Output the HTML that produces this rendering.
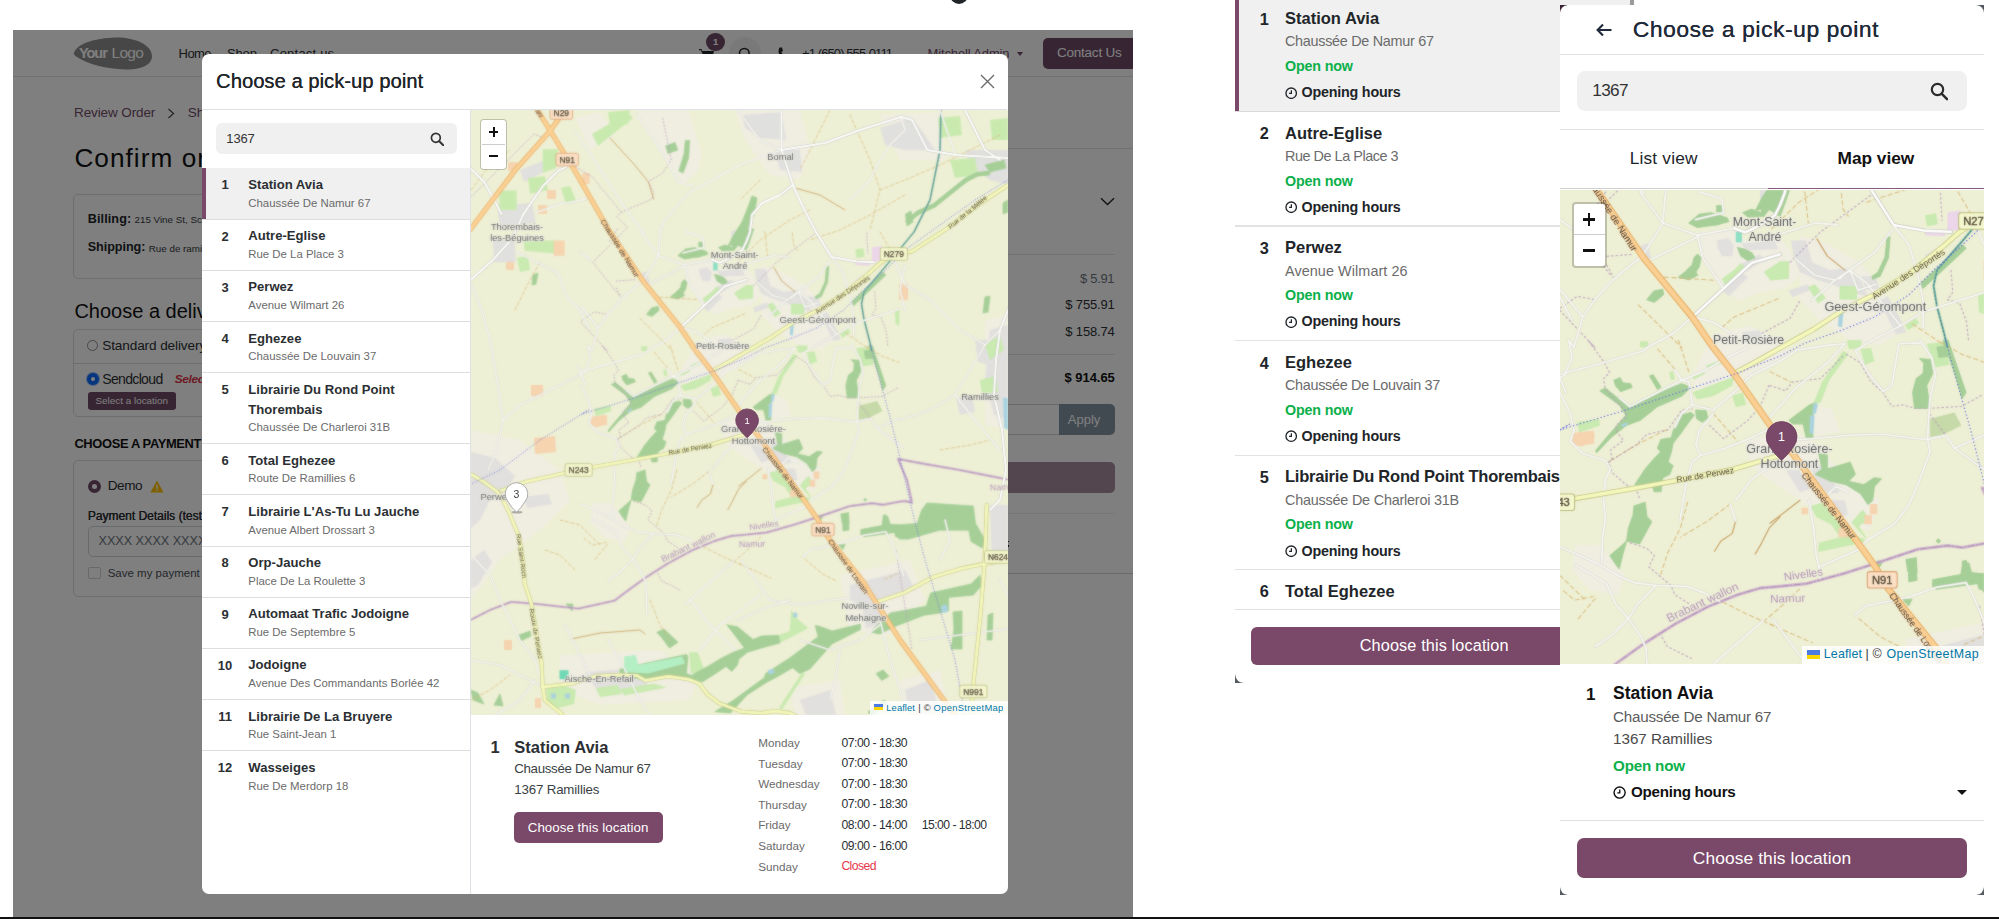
<!DOCTYPE html>
<html>
<head>
<meta charset="utf-8">
<title>Choose a pick-up point</title>
<style>
*{box-sizing:border-box;margin:0;padding:0}
html,body{width:1999px;height:919px;overflow:hidden;background:#fff}
body{font-family:"Liberation Sans",sans-serif;color:#212529;position:relative}
.abs{position:absolute}
.t{position:absolute;white-space:nowrap;line-height:1}
#page{position:absolute;left:0;top:0;width:1133px;height:918px;background:#fff;overflow:hidden;clip-path:inset(30px 0 0 13px)}
#dim{position:absolute;left:13px;top:30px;width:1120px;height:888px;background:rgba(0,0,0,.5)}
#modal{position:absolute;left:202px;top:54px;width:805.5px;height:840.4px;background:#fff;border-radius:7px;overflow:hidden}
svg text{font-family:"Liberation Sans",sans-serif}
</style>
</head>

<body>
<svg width="0" height="0" style="position:absolute"><defs><g id="osm" font-family="Liberation Sans, sans-serif">
<rect x="440" y="80" width="600" height="660" fill="#eef0d5"/>
<polygon points="684.0,262.7 712.5,259.6 720.0,268.8 746.3,267.3 753.8,276.5 761.3,295.7 750.8,305.7 731.3,308.8 716.3,314.9 705.0,308.8 698.3,299.5 689.3,285.7" fill="#f0eee1" />
<polygon points="761.3,265.0 783.8,272.7 806.3,285.7 821.3,303.4 840.1,337.9 821.3,349.5 798.8,345.6 776.3,330.3 761.3,314.9" fill="#f0eee1" />
<polygon points="695.3,341.8 723.8,334.1 742.5,344.1 753.8,354.8 731.3,370.2 708.8,379.4 686.3,385.6 678.8,374.8 686.3,361.0" fill="#f0eee1" />
<polygon points="771.0,395.5 785.3,397.8 791.3,416.3 772.5,419.4" fill="#f0eee1" />
<polygon points="720.0,422.4 753.8,414.7 770.3,422.4 798.8,453.1 821.3,468.5 813.8,491.6 783.8,483.9 761.3,468.5 738.8,453.1 723.8,441.6" fill="#f0eee1" />
<polygon points="592.5,503.1 611.3,503.1 630.0,526.1 624.8,541.5 603.8,537.6 590.2,522.3" fill="#f0eee1" />
<polygon points="636.4,110.0 688.6,110.0 701.6,153.5 697.3,173.1 682.0,184.0 666.8,160.0" fill="#f0eee1" />
<polygon points="575.0,118.0 600.0,112.0 615.0,135.0 590.0,150.0" fill="#f0eee1" />
<polygon points="471.0,430.0 520.0,440.0 560.0,470.0 570.0,500.0 540.0,530.0 500.0,560.0 471.0,600.0" fill="#f0eee1" />
<polygon points="735.0,110.0 800.0,110.0 810.0,150.0 800.0,180.0 770.0,175.0 745.0,140.0" fill="#f0eee1" />
<polygon points="560.0,655.0 660.0,650.0 700.0,675.0 690.0,700.0 600.0,705.0 560.0,690.0" fill="#f0eee1" />
<polygon points="840.0,575.0 910.0,560.0 925.0,600.0 890.0,635.0 850.0,630.0" fill="#f0eee1" />
<polygon points="985.0,320.0 1008.0,315.0 1008.0,430.0 985.0,425.0" fill="#f0eee1" />
<polygon points="880.0,115.0 940.0,112.0 945.0,160.0 900.0,160.0" fill="#f0eee1" />
<polygon points="790.0,688.0 840.0,680.0 845.0,715.0 795.0,715.0" fill="#f0eee1" />
<polygon points="900.0,680.0 940.0,670.0 950.0,715.0 905.0,715.0" fill="#f0eee1" />
<polygon points="698.8,269.0 707.3,267.3 711.8,272.7 710.3,281.0 702.8,281.1 699.8,275.0" fill="#e1e0de" />
<polygon points="717.0,271.1 742.5,269.6 744.8,275.7 720.8,276.5" fill="#e1e0de" />
<polygon points="714.8,288.0 731.3,279.6 734.3,284.2 720.0,293.4 713.3,293.4" fill="#e1e0de" />
<polygon points="731.3,230.4 740.3,230.4 741.8,241.9 735.8,248.8 731.3,241.9" fill="#e1e0de" />
<polygon points="702.8,307.2 717.8,293.4 722.3,297.2 708.0,311.8" fill="#e1e0de" />
<polygon points="754.5,269.0 765.8,268.8 770.3,285.7 783.8,291.9 795.8,290.3 807.8,301.1 811.9,311.8 798.8,308.8 787.5,303.4 774.8,299.5 761.3,293.4 756.8,282.6" fill="#e1e0de" />
<polygon points="753.0,307.2 767.3,302.6 768.8,307.2 755.3,312.6" fill="#e1e0de" />
<polygon points="807.8,296.5 818.3,296.5 820.6,305.7 810.8,307.2" fill="#e1e0de" />
<polygon points="821.3,314.9 827.3,311.8 836.3,328.7 840.8,339.5 833.3,341.0 827.3,328.7" fill="#e1e0de" />
<polygon points="855.1,280.3 866.3,273.4 868.6,276.5 857.3,284.2" fill="#e1e0de" />
<polygon points="717.8,339.5 731.3,337.9 732.8,345.6 719.3,347.2" fill="#e1e0de" />
<polygon points="768.8,441.6 777.8,441.6 786.8,455.5 791.3,462.4 782.3,463.9 773.3,453.1" fill="#e1e0de" />
<polygon points="750.8,445.5 761.3,445.5 770.3,459.3 761.3,462.4" fill="#e1e0de" />
<polygon points="783.8,468.5 795.0,468.5 797.3,480.0 787.5,480.8" fill="#e1e0de" />
<polygon points="641.3,273.4 647.3,271.1 649.5,282.6 644.3,284.2" fill="#e1e0de" />
<polygon points="497.0,205.7 532.0,203.0 536.0,223.0 500.0,226.0" fill="#e1e0de" />
<polygon points="492.8,240.5 514.5,240.5 516.0,262.3 494.0,262.3" fill="#e1e0de" />
<polygon points="520.0,170.0 545.0,160.0 548.0,170.0 524.0,182.0" fill="#e1e0de" />
<polygon points="742.0,115.0 782.0,112.0 786.0,140.0 760.0,138.0 745.0,128.0" fill="#e1e0de" />
<polygon points="775.0,150.0 800.0,150.0 802.0,172.0 780.0,170.0" fill="#e1e0de" />
<polygon points="880.0,128.0 912.0,118.0 925.0,135.0 935.0,150.0 905.0,150.0 885.0,145.0" fill="#e1e0de" />
<polygon points="965.0,150.0 1008.0,150.0 1008.0,185.0 990.0,180.0 970.0,165.0" fill="#e1e0de" />
<polygon points="990.0,330.0 1008.0,325.0 1008.0,420.0 994.0,415.0 985.0,380.0" fill="#e1e0de" />
<polygon points="956.0,398.0 972.0,395.0 975.0,412.0 960.0,415.0" fill="#e1e0de" />
<polygon points="975.0,340.0 990.0,340.0 990.0,365.0 978.0,362.0" fill="#e1e0de" />
<polygon points="850.0,585.0 905.0,570.0 915.0,590.0 880.0,602.0 862.0,606.0 850.0,600.0" fill="#e1e0de" />
<polygon points="862.0,606.0 882.0,602.0 886.0,625.0 866.0,628.0" fill="#e1e0de" />
<polygon points="905.0,690.0 930.0,680.0 940.0,712.0 910.0,715.0" fill="#e1e0de" />
<polygon points="800.0,700.0 830.0,690.0 836.0,715.0 806.0,715.0" fill="#e1e0de" />
<polygon points="990.0,505.0 1008.0,505.0 1008.0,560.0 992.0,560.0" fill="#e1e0de" />
<polygon points="471.0,452.0 495.0,458.0 515.0,476.0 505.0,492.0 490.0,500.0 480.0,520.0 471.0,528.0" fill="#e1e0de" />
<polygon points="471.0,560.0 484.0,550.0 492.0,562.0 478.0,585.0 471.0,588.0" fill="#e1e0de" />
<polygon points="522.0,497.0 548.0,494.0 552.0,504.0 528.0,508.0" fill="#e1e0de" />
<polygon points="585.0,672.0 640.0,668.0 650.0,690.0 600.0,695.0" fill="#e1e0de" />
<polygon points="702.7,298.4 711.8,291.7 717.0,286.3 719.7,289.0 713.1,295.7 705.3,303.8" fill="#c9eab0" />
<polygon points="734.1,293.1 746.3,285.0 753.0,284.9 753.0,298.4 739.2,299.7" fill="#c9eab0" />
<polygon points="680.5,385.7 711.8,373.7 710.5,380.4 696.2,388.4 684.4,391.1" fill="#c9eab0" />
<polygon points="710.5,388.4 718.4,385.7 720.9,395.1 713.1,397.1" fill="#c9eab0" />
<polygon points="594.3,408.4 610.7,405.8 611.3,411.1 595.6,416.5" fill="#c9eab0" />
<polygon points="771.4,393.8 777.9,377.7 793.6,353.6 797.5,356.3 783.2,376.3 776.7,393.8" fill="#c9eab0" />
<polygon points="856.3,348.3 870.7,346.9 873.3,364.4 862.9,366.4" fill="#c9eab0" />
<polygon points="806.7,352.3 814.6,351.6 817.1,361.7 810.0,364.4" fill="#c9eab0" />
<polygon points="791.0,303.8 804.1,303.8 804.1,314.4 791.0,314.4" fill="#c9eab0" />
<polygon points="767.3,304.9 772.5,302.6 780.8,313.4 774.8,317.2" fill="#c9eab0" />
<polygon points="769.3,472.8 779.1,470.0 786.0,479.9 805.4,496.9 811.0,498.4 799.8,485.6 808.2,475.7 813.7,482.7 805.4,488.4 811.0,496.9 808.2,501.2 774.9,508.3 775.5,501.2 791.5,496.9 784.6,487.0 773.5,481.3" fill="#c9eab0" />
<polygon points="796.5,345.6 807.8,345.6 806.3,351.8 798.0,352.5" fill="#c9eab0" />
<polygon points="690.8,365.2 701.3,361.0 702.4,363.3 691.9,367.9" fill="#c9eab0" />
<polygon points="680.3,373.3 689.3,369.0 690.0,371.4 681.4,376.0" fill="#c9eab0" />
<polygon points="663.0,370.2 666.0,369.4 667.5,375.6 664.5,376.3" fill="#c9eab0" />
<polygon points="641.3,346.4 647.3,346.4 647.3,351.0 641.3,351.0" fill="#c9eab0" />
<polygon points="840.1,334.1 848.3,328.7 850.6,332.6 842.3,337.9" fill="#c9eab0" />
<polygon points="855.1,249.6 863.3,248.1 864.8,256.5 856.6,258.1" fill="#c9eab0" />
<polygon points="894.8,311.1 899.3,309.5 899.3,325.7 895.6,324.1" fill="#c9eab0" />
<polygon points="751.5,427.0 756.0,425.5 757.5,430.1 753.0,431.6" fill="#c9eab0" />
<polygon points="499.3,190.5 516.7,190.5 516.7,210.0 499.3,210.0" fill="#c9eab0" />
<polygon points="523.2,240.5 558.0,240.5 556.0,253.6 525.0,251.0" fill="#c9eab0" />
<polygon points="542.8,149.2 558.0,149.2 556.0,168.0 542.8,173.0" fill="#c9eab0" />
<polygon points="592.0,134.0 628.0,113.0 633.0,118.0 598.0,146.0" fill="#c9eab0" />
<polygon points="608.0,112.0 630.0,110.0 628.0,124.0 610.0,127.0" fill="#c9eab0" />
<polygon points="528.0,178.0 545.0,176.0 548.0,190.0 530.0,194.0" fill="#c9eab0" />
<polygon points="561.0,188.0 570.0,186.0 576.0,200.0 566.0,204.0" fill="#c9eab0" />
<polygon points="517.0,258.0 528.0,256.0 530.0,270.0 520.0,272.0" fill="#c9eab0" />
<polygon points="689.3,652.3 697.8,652.3 704.9,672.0 690.7,673.5" fill="#c9eab0" />
<polygon points="620.0,689.0 654.0,683.4 666.7,687.6 624.2,695.4" fill="#c9eab0" />
<polygon points="802.0,672.5 805.0,674.0 782.0,709.5 779.0,708.0" fill="#c9eab0" />
<polygon points="546.0,688.0 560.0,684.0 576.0,690.0 574.0,704.0 558.0,708.0 547.0,702.0" fill="#c9eab0" />
<polygon points="596.0,688.0 618.0,685.0 622.0,694.0 600.0,697.0" fill="#c9eab0" />
<polygon points="778.5,635.3 789.8,631.0 791.2,609.8 796.9,618.3 808.2,628.2 779.9,643.1" fill="#c9eab0" />
<polygon points="990.0,120.0 1008.0,118.0 1008.0,140.0 992.0,140.0" fill="#c9eab0" />
<polygon points="938.0,118.0 960.0,116.0 962.0,135.0 940.0,138.0" fill="#c9eab0" />
<polygon points="950.0,160.0 975.0,158.0 978.0,175.0 955.0,178.0" fill="#c9eab0" />
<polygon points="985.0,345.0 1000.0,335.0 1004.0,350.0 990.0,360.0" fill="#c9eab0" />
<polygon points="980.0,380.0 996.0,376.0 998.0,392.0 982.0,394.0" fill="#c9eab0" />
<polygon points="858.9,405.8 877.2,401.1 882.4,411.1 869.3,417.8 858.9,419.8" fill="#c6d9a8" />
<polygon points="677.9,255.6 685.7,248.9 694.8,247.6 706.6,251.6 707.9,254.3 698.8,257.0 693.5,257.6 684.4,259.0" fill="#a6cf98" stroke="#a6cf98" stroke-width="0.8" stroke-linejoin="round"/>
<polygon points="698.8,242.2 703.3,242.2 703.3,246.9 698.8,246.9" fill="#a6cf98" stroke="#a6cf98" stroke-width="0.8" stroke-linejoin="round"/>
<polygon points="718.4,247.6 724.9,244.9 732.7,247.6 731.4,239.6 738.0,231.6 746.3,228.9 753.8,228.9 750.8,238.1 746.3,250.3 738.0,244.9 734.1,250.3 722.3,250.9" fill="#a6cf98" stroke="#a6cf98" stroke-width="0.8" stroke-linejoin="round"/>
<polygon points="681.8,282.3 684.4,279.6 687.0,282.3 685.7,289.0 683.1,293.1 684.4,295.7 677.9,299.1 670.1,297.1 675.2,293.1 680.5,287.7" fill="#a6cf98" stroke="#a6cf98" stroke-width="0.8" stroke-linejoin="round"/>
<polygon points="646.5,314.4 651.8,307.8 658.3,306.5 659.0,310.4 654.4,314.4 651.8,316.4" fill="#a6cf98" stroke="#a6cf98" stroke-width="0.8" stroke-linejoin="round"/>
<polygon points="714.4,274.3 719.7,275.7 724.9,278.3 727.5,282.3 722.3,284.3 717.0,281.0" fill="#a6cf98" stroke="#a6cf98" stroke-width="0.8" stroke-linejoin="round"/>
<polygon points="611.3,384.4 615.2,382.4 632.2,396.4 659.6,384.4 672.6,379.0 679.1,381.7 672.6,388.4 654.4,396.4 641.3,407.1 630.8,411.1 619.1,420.5 608.7,431.9 608.0,430.5 617.8,418.5 624.3,411.1 630.8,403.1 625.7,395.1" fill="#a6cf98" stroke="#a6cf98" stroke-width="0.8" stroke-linejoin="round"/>
<polygon points="621.8,376.3 626.3,374.3 628.3,378.3 634.1,379.0 635.4,381.7 626.9,385.0 623.0,380.4" fill="#a6cf98" stroke="#a6cf98" stroke-width="0.8" stroke-linejoin="round"/>
<polygon points="648.5,373.0 651.1,372.1 657.0,381.7 654.4,383.3" fill="#a6cf98" stroke="#a6cf98" stroke-width="0.8" stroke-linejoin="round"/>
<polygon points="672.6,403.1 679.1,401.1 681.8,403.1 677.9,408.4 671.3,417.8 666.1,424.5 664.8,431.2 662.2,439.2 666.1,441.9 663.5,448.5 658.3,451.2 657.0,461.9 651.8,461.9 650.5,456.6 637.4,456.6 645.2,444.5 651.8,436.6 657.0,431.2 654.4,428.5 657.0,421.8 664.8,420.5 666.1,415.1" fill="#a6cf98" stroke="#a6cf98" stroke-width="0.8" stroke-linejoin="round"/>
<polygon points="683.1,399.1 690.8,399.8 692.3,405.5 687.8,408.4 683.6,405.5" fill="#a6cf98" stroke="#a6cf98" stroke-width="0.8" stroke-linejoin="round"/>
<polygon points="753.1,407.1 768.8,395.1 772.8,393.8 771.4,401.8 768.8,412.4 771.4,420.5 766.2,421.2 763.6,409.8 755.7,409.8" fill="#a6cf98" stroke="#a6cf98" stroke-width="0.8" stroke-linejoin="round"/>
<polygon points="851.1,359.7 858.9,360.3 860.9,371.0 856.3,380.4 858.9,397.8 847.2,397.8 845.8,385.7 848.5,375.0 853.7,371.0 854.3,363.0" fill="#a6cf98" stroke="#a6cf98" stroke-width="0.8" stroke-linejoin="round"/>
<polygon points="775.3,432.5 781.8,433.9 781.8,444.5 798.9,439.2 802.8,448.5 797.5,453.9 809.3,456.6 817.1,451.2 822.4,451.9 817.1,457.9 815.8,468.5 812.3,471.6 806.7,463.3 796.2,456.6 784.5,453.9 772.8,448.5 777.9,444.5" fill="#a6cf98" stroke="#a6cf98" stroke-width="0.8" stroke-linejoin="round"/>
<polygon points="636.8,472.8 645.1,470.0 646.5,481.3 650.0,484.9 641.0,501.9 631.2,499.8 632.6,489.9 636.1,479.9" fill="#a6cf98" stroke="#a6cf98" stroke-width="0.8" stroke-linejoin="round"/>
<polygon points="631.2,499.8 628.4,509.8 625.7,521.1 622.9,517.5 618.8,511.1 628.4,502.6" fill="#a6cf98" stroke="#a6cf98" stroke-width="0.8" stroke-linejoin="round"/>
<polygon points="840.8,514.0 848.5,512.6 849.1,524.0 842.2,523.2" fill="#a6cf98" stroke="#a6cf98" stroke-width="0.8" stroke-linejoin="round"/>
<polygon points="860.9,529.6 883.1,525.3 883.1,515.4 885.9,514.7 888.7,524.0 903.8,525.3 903.8,538.2 895.6,536.7 894.2,531.0 885.9,531.0 860.9,535.3" fill="#a6cf98" stroke="#a6cf98" stroke-width="0.8" stroke-linejoin="round"/>
<polygon points="863.6,499.8 865.1,498.2 866.6,499.8 865.1,501.3" fill="#a6cf98" stroke="#a6cf98" stroke-width="0.8" stroke-linejoin="round"/>
<polygon points="819.1,515.4 824.3,514.6 820.6,520.0" fill="#a6cf98" stroke="#a6cf98" stroke-width="0.8" stroke-linejoin="round"/>
<polygon points="838.6,544.9 845.3,544.5 842.7,549.5" fill="#a6cf98" stroke="#a6cf98" stroke-width="0.8" stroke-linejoin="round"/>
<polygon points="826.6,266.3 828.8,266.3 827.6,282.3 821.3,296.5 815.8,298.8 815.3,296.5 819.8,293.4 825.1,281.9" fill="#a6cf98" stroke="#a6cf98" stroke-width="0.8" stroke-linejoin="round"/>
<polygon points="868.6,345.6 872.3,345.6 885.8,385.6 882.8,390.2 879.1,376.3" fill="#a6cf98" stroke="#a6cf98" stroke-width="0.8" stroke-linejoin="round"/>
<polygon points="864.1,351.0 873.1,349.5 873.8,357.9 865.6,358.7" fill="#a6cf98" stroke="#a6cf98" stroke-width="0.8" stroke-linejoin="round"/>
<polygon points="850.6,303.0 883.2,272.3 885.8,275.0 853.6,305.7" fill="#a6cf98" stroke="#a6cf98" stroke-width="0.8" stroke-linejoin="round"/>
<polygon points="726.8,624.7 737.4,626.8 753.0,639.5 761.5,636.0 778.5,635.3 779.9,643.1 761.5,648.0 747.3,652.3 738.8,659.3 737.4,665.0 731.8,671.4 726.1,666.4 713.4,674.9 702.1,682.0 692.2,674.9 707.7,666.4 721.9,657.9 733.2,652.3 744.5,648.0" fill="#a6cf98" stroke="#a6cf98" stroke-width="0.8" stroke-linejoin="round"/>
<polygon points="815.2,625.4 820.9,626.8 832.2,631.0 860.5,624.0 860.5,629.6 832.2,643.8 820.9,656.5 809.6,669.2 799.7,673.5 792.6,667.8 775.6,677.7 767.1,682.0 747.3,694.7 730.4,713.1 714.8,711.7 733.2,700.4 764.3,677.7 765.7,673.5 789.8,657.9 818.1,636.7" fill="#a6cf98" stroke="#a6cf98" stroke-width="0.8" stroke-linejoin="round"/>
<polygon points="644.0,663.6 686.5,654.4 687.9,656.5 686.5,673.5 704.9,680.5 699.2,682.0 668.1,674.9 639.8,679.1 620.0,674.9 620.0,669.2" fill="#a6cf98" stroke="#a6cf98" stroke-width="0.8" stroke-linejoin="round"/>
<polygon points="656.8,632.4 663.9,628.9 678.0,642.3 669.5,648.0 661.0,636.7" fill="#a6cf98" stroke="#a6cf98" stroke-width="0.8" stroke-linejoin="round"/>
<polygon points="876.1,673.5 883.2,669.9 888.8,676.3 881.7,680.5" fill="#a6cf98" stroke="#a6cf98" stroke-width="0.8" stroke-linejoin="round"/>
<polygon points="868.0,712.0 884.0,700.0 887.0,703.0 872.0,716.0" fill="#a6cf98" stroke="#a6cf98" stroke-width="0.8" stroke-linejoin="round"/>
<polygon points="861.2,531.3 881.4,529.0 883.6,516.7 888.0,516.7 890.4,525.7 917.2,523.4 921.7,510.0 927.0,503.0 973.3,506.0 975.5,523.4 984.5,539.1 982.2,548.1 971.0,541.4 968.8,530.2 939.7,530.2 908.3,539.1 899.3,539.1 894.8,532.4 863.5,536.9" fill="#a6cf98" stroke="#a6cf98" stroke-width="0.8" stroke-linejoin="round"/>
<polygon points="890.4,613.0 926.2,606.3 930.7,593.0 971.0,584.0 980.0,575.0 981.0,586.2 973.3,595.1 948.6,597.4 948.6,610.8 939.7,613.0 924.0,615.3 894.8,626.5 880.0,634.0 870.0,632.0" fill="#a6cf98" stroke="#a6cf98" stroke-width="0.8" stroke-linejoin="round"/>
<polygon points="953.0,612.0 962.0,611.0 962.0,649.0 951.0,649.0 954.0,630.0" fill="#a6cf98" stroke="#a6cf98" stroke-width="0.8" stroke-linejoin="round"/>
<polygon points="842.6,521.0 848.5,520.0 849.0,530.0 843.0,531.0" fill="#a6cf98" stroke="#a6cf98" stroke-width="0.8" stroke-linejoin="round"/>
<polygon points="752.0,196.0 757.0,198.0 754.0,215.0 746.0,232.0 738.0,243.0 728.0,246.0 733.0,236.0 742.0,222.0 748.0,207.0" fill="#a6cf98" stroke="#a6cf98" stroke-width="0.8" stroke-linejoin="round"/>
<polygon points="1003.0,203.0 1008.0,200.0 1008.0,212.0 1003.0,214.0" fill="#a6cf98" stroke="#a6cf98" stroke-width="0.8" stroke-linejoin="round"/>
<polygon points="985.0,297.0 990.0,296.0 988.0,312.0 983.0,313.0" fill="#a6cf98" stroke="#a6cf98" stroke-width="0.8" stroke-linejoin="round"/>
<polygon points="985.0,165.0 1004.0,160.0 1006.0,168.0 990.0,172.0" fill="#a6cf98" stroke="#a6cf98" stroke-width="0.8" stroke-linejoin="round"/>
<polygon points="905.5,214.0 911.0,211.0 913.0,222.0 907.0,226.0" fill="#a6cf98" stroke="#a6cf98" stroke-width="0.8" stroke-linejoin="round"/>
<polygon points="665.7,145.9 675.0,142.6 677.7,150.0 668.0,153.5" fill="#a6cf98" stroke="#a6cf98" stroke-width="0.8" stroke-linejoin="round"/>
<polygon points="685.3,140.5 689.7,140.5 688.6,157.9 683.1,173.1 678.8,170.9 684.2,153.5" fill="#a6cf98" stroke="#a6cf98" stroke-width="0.8" stroke-linejoin="round"/>
<polygon points="533.0,275.0 538.0,273.0 536.0,284.0 532.0,285.0" fill="#a6cf98" stroke="#a6cf98" stroke-width="0.8" stroke-linejoin="round"/>
<polygon points="471.0,690.0 478.0,693.0 484.0,704.0 473.0,700.0" fill="#a6cf98" stroke="#a6cf98" stroke-width="0.8" stroke-linejoin="round"/>
<polygon points="494.0,705.0 500.0,694.0 503.0,706.0" fill="#a6cf98" stroke="#a6cf98" stroke-width="0.8" stroke-linejoin="round"/>
<polygon points="519.0,635.0 530.0,631.0 531.0,636.0 521.0,641.0" fill="#a6cf98" stroke="#a6cf98" stroke-width="0.8" stroke-linejoin="round"/>
<polygon points="566.0,604.0 573.0,604.0 572.0,611.0" fill="#a6cf98" stroke="#a6cf98" stroke-width="0.8" stroke-linejoin="round"/>
<polygon points="988.0,615.0 993.0,613.0 992.0,640.0 987.0,640.0" fill="#a6cf98" stroke="#a6cf98" stroke-width="0.8" stroke-linejoin="round"/>
<polyline points="907.7,221.0 918.6,212.3 933.8,205.7 944.7,197.0 955.6,188.3 966.5,179.6 977.3,174.2 988.2,173.1" fill="none" stroke="#a6cf98" stroke-width="4.60" stroke-linejoin="round" stroke-linecap="round" />
<polygon points="590.4,420.5 594.3,416.5 606.7,415.1 607.4,420.5 598.2,427.2 591.7,425.8" fill="#f6d4b0" />
<polygon points="762.4,474.2 767.3,474.2 767.3,479.2 762.4,479.2" fill="#f6d4b0" />
<polygon points="813.7,471.4 819.3,471.4 819.3,479.2 813.7,479.2" fill="#f6d4b0" />
<polygon points="809.6,479.9 815.2,479.9 815.2,486.9 809.6,486.9" fill="#f6d4b0" />
<polygon points="790.2,489.9 797.1,489.9 797.1,496.9 790.2,496.9" fill="#f6d4b0" />
<polygon points="508.0,162.0 517.0,162.0 517.0,171.0 508.0,171.0" fill="#f6d4b0" />
<polygon points="547.0,190.0 556.0,190.0 556.0,199.0 547.0,199.0" fill="#f6d4b0" />
<polygon points="538.0,205.0 547.0,205.0 547.0,214.0 538.0,214.0" fill="#f6d4b0" />
<polygon points="553.7,240.5 564.6,240.5 564.6,255.8 553.7,255.8" fill="#f6d4b0" />
<polygon points="582.0,173.0 589.6,173.0 589.6,184.0 582.0,184.0" fill="#f6d4b0" />
<polygon points="506.0,262.0 514.0,262.0 514.0,270.0 506.0,270.0" fill="#f6d4b0" />
<polygon points="531.0,385.0 543.0,385.0 543.0,396.0 531.0,396.0" fill="#f6d4b0" />
<polygon points="590.0,417.0 606.0,415.0 607.0,425.0 591.0,427.0" fill="#f6d4b0" />
<polygon points="534.0,438.0 555.0,436.0 556.0,452.0 535.0,454.0" fill="#f6d4b0" />
<polygon points="899.0,284.0 908.0,284.0 908.0,300.0 899.0,300.0" fill="#f6d4b0" />
<polygon points="504.0,640.0 512.0,640.0 512.0,650.0 504.0,650.0" fill="#f6d4b0" />
<polygon points="535.0,698.0 541.0,698.0 541.0,708.0 535.0,708.0" fill="#f6d4b0" />
<polygon points="871.9,247.6 880.5,247.6 880.5,261.0 871.9,261.0" fill="#ecd6ea" />
<polygon points="855.1,261.9 870.1,262.7 870.1,265.7 855.1,265.0" fill="#ecd6ea" />
<polygon points="873.0,247.0 882.0,246.0 883.0,258.0 874.0,259.0" fill="#ecd6ea" />
<polygon points="771.4,394.4 774.8,394.0 773.3,401.7 770.7,402.5" fill="#aad3df" />
<polygon points="768.8,403.2 772.2,403.2 771.4,417.8 768.4,417.1" fill="#aad3df" />
<polygon points="790.5,324.1 793.9,324.1 792.8,335.6 789.8,334.9" fill="#aad3df" />
<polygon points="627.0,410.5 631.5,408.6 632.3,410.1 627.8,412.4" fill="#aad3df" />
<polygon points="672.0,660.5 677.0,660.0 678.0,664.5 673.0,665.0" fill="#aad3df" />
<polygon points="793.0,613.0 797.0,612.5 797.5,617.0 793.5,617.5" fill="#aad3df" />
<polygon points="767.5,670.5 773.0,668.5 775.0,672.5 769.5,675.0" fill="#aad3df" />
<polygon points="551.0,693.5 556.0,693.5 556.0,698.5 551.0,698.5" fill="#aad3df" />
<polygon points="565.0,693.5 570.0,693.5 570.0,698.5 565.0,698.5" fill="#aad3df" />
<polygon points="1003.0,398.0 1008.0,398.0 1008.0,430.0 1004.0,428.0" fill="#aad3df" />
<polygon points="941.0,606.0 947.0,604.0 948.0,612.0 942.0,613.0" fill="#aad3df" />
<polygon points="713.1,262.3 717.7,262.3 717.7,270.4 713.1,270.4" fill="#8fe0c4" />
<polygon points="559.5,670.2 568.5,670.2 568.5,679.2 559.5,679.2" fill="#6fd8b5" />
<polygon points="624.2,656.5 635.6,655.1 638.4,665.0 682.3,656.5 685.1,663.6 648.3,673.5 624.2,672.0" fill="#b4efc4" />
<polyline points="659.6,297.1 698.8,299.7" fill="none" stroke="#d8b878" stroke-width="0.80" stroke-linejoin="round" stroke-linecap="round" stroke-dasharray="3.2 2.4" opacity="0.9"/>
<polyline points="640.0,318.4 672.6,351.2" fill="none" stroke="#d8b878" stroke-width="0.80" stroke-linejoin="round" stroke-linecap="round" stroke-dasharray="3.2 2.4" opacity="0.9"/>
<polyline points="702.7,335.8 711.8,327.8 746.3,313.1" fill="none" stroke="#d8b878" stroke-width="0.80" stroke-linejoin="round" stroke-linecap="round" stroke-dasharray="3.2 2.4" opacity="0.9"/>
<polyline points="654.4,352.3 667.4,367.7" fill="none" stroke="#d8b878" stroke-width="0.80" stroke-linejoin="round" stroke-linecap="round" stroke-dasharray="3.2 2.4" opacity="0.9"/>
<polyline points="670.1,345.6 677.9,369.7" fill="none" stroke="#d8b878" stroke-width="0.80" stroke-linejoin="round" stroke-linecap="round" stroke-dasharray="3.2 2.4" opacity="0.9"/>
<polyline points="696.2,401.8 714.4,423.2" fill="none" stroke="#d8b878" stroke-width="0.80" stroke-linejoin="round" stroke-linecap="round" stroke-dasharray="3.2 2.4" opacity="0.9"/>
<polyline points="619.1,437.9 638.7,425.8 662.2,413.8" fill="none" stroke="#d8b878" stroke-width="0.80" stroke-linejoin="round" stroke-linecap="round" stroke-dasharray="3.2 2.4" opacity="0.9"/>
<polyline points="764.9,231.6 767.5,255.6" fill="none" stroke="#d8b878" stroke-width="0.80" stroke-linejoin="round" stroke-linecap="round" stroke-dasharray="3.2 2.4" opacity="0.9"/>
<polyline points="792.3,232.9 793.6,244.9 797.5,250.3" fill="none" stroke="#d8b878" stroke-width="0.80" stroke-linejoin="round" stroke-linecap="round" stroke-dasharray="3.2 2.4" opacity="0.9"/>
<polyline points="879.8,231.6 889.0,247.6" fill="none" stroke="#d8b878" stroke-width="0.80" stroke-linejoin="round" stroke-linecap="round" stroke-dasharray="3.2 2.4" opacity="0.9"/>
<polyline points="845.8,333.2 869.3,349.2" fill="none" stroke="#d8b878" stroke-width="0.80" stroke-linejoin="round" stroke-linecap="round" stroke-dasharray="3.2 2.4" opacity="0.9"/>
<polyline points="738.8,369.7 754.5,377.7" fill="none" stroke="#d8b878" stroke-width="0.80" stroke-linejoin="round" stroke-linecap="round" stroke-dasharray="3.2 2.4" opacity="0.9"/>
<polyline points="866.8,346.9 882.4,356.3 899.1,362.4" fill="none" stroke="#d8b878" stroke-width="0.80" stroke-linejoin="round" stroke-linecap="round" stroke-dasharray="3.2 2.4" opacity="0.9"/>
<polyline points="677.0,470.0 671.5,489.9 661.7,509.8 656.9,525.3" fill="none" stroke="#d8b878" stroke-width="0.80" stroke-linejoin="round" stroke-linecap="round" stroke-dasharray="3.2 2.4" opacity="0.9"/>
<polyline points="708.9,471.4 692.3,484.2 671.5,496.9" fill="none" stroke="#d8b878" stroke-width="0.80" stroke-linejoin="round" stroke-linecap="round" stroke-dasharray="3.2 2.4" opacity="0.9"/>
<polyline points="584.0,538.2 592.3,545.2 606.2,542.4" fill="none" stroke="#d8b878" stroke-width="0.80" stroke-linejoin="round" stroke-linecap="round" stroke-dasharray="3.2 2.4" opacity="0.9"/>
<polyline points="607.7,543.9 593.8,560.9" fill="none" stroke="#d8b878" stroke-width="0.80" stroke-linejoin="round" stroke-linecap="round" stroke-dasharray="3.2 2.4" opacity="0.9"/>
<polyline points="703.4,546.7 720.0,555.2 733.9,561.6 746.3,566.6" fill="none" stroke="#d8b878" stroke-width="0.80" stroke-linejoin="round" stroke-linecap="round" stroke-dasharray="3.2 2.4" opacity="0.9"/>
<polyline points="733.9,561.6 746.3,550.9 762.4,535.3" fill="none" stroke="#d8b878" stroke-width="0.80" stroke-linejoin="round" stroke-linecap="round" stroke-dasharray="3.2 2.4" opacity="0.9"/>
<polyline points="738.8,563.7 770.7,578.0" fill="none" stroke="#d8b878" stroke-width="0.80" stroke-linejoin="round" stroke-linecap="round" stroke-dasharray="3.2 2.4" opacity="0.9"/>
<polyline points="805.4,559.4 822.1,573.7 835.9,580.8" fill="none" stroke="#d8b878" stroke-width="0.80" stroke-linejoin="round" stroke-linecap="round" stroke-dasharray="3.2 2.4" opacity="0.9"/>
<polyline points="884.5,579.3 897.0,573.7" fill="none" stroke="#d8b878" stroke-width="0.80" stroke-linejoin="round" stroke-linecap="round" stroke-dasharray="3.2 2.4" opacity="0.9"/>
<polyline points="471.0,190.0 490.0,165.0 510.0,150.0" fill="none" stroke="#d8b878" stroke-width="0.80" stroke-linejoin="round" stroke-linecap="round" stroke-dasharray="3.2 2.4" opacity="0.9"/>
<polyline points="515.0,310.0 530.0,280.0 540.0,262.0" fill="none" stroke="#d8b878" stroke-width="0.80" stroke-linejoin="round" stroke-linecap="round" stroke-dasharray="3.2 2.4" opacity="0.9"/>
<polyline points="830.0,110.0 815.0,140.0 800.0,170.0" fill="none" stroke="#d8b878" stroke-width="0.80" stroke-linejoin="round" stroke-linecap="round" stroke-dasharray="3.2 2.4" opacity="0.9"/>
<polyline points="850.0,115.0 870.0,160.0 880.0,190.0 870.0,230.0" fill="none" stroke="#d8b878" stroke-width="0.80" stroke-linejoin="round" stroke-linecap="round" stroke-dasharray="3.2 2.4" opacity="0.9"/>
<polyline points="905.0,195.0 870.0,215.0 840.0,230.0 810.0,240.0" fill="none" stroke="#d8b878" stroke-width="0.80" stroke-linejoin="round" stroke-linecap="round" stroke-dasharray="3.2 2.4" opacity="0.9"/>
<polyline points="880.0,190.0 905.0,180.0 940.0,165.0 1000.0,135.0" fill="none" stroke="#d8b878" stroke-width="0.80" stroke-linejoin="round" stroke-linecap="round" stroke-dasharray="3.2 2.4" opacity="0.9"/>
<polyline points="760.0,180.0 740.0,200.0" fill="none" stroke="#d8b878" stroke-width="0.80" stroke-linejoin="round" stroke-linecap="round" stroke-dasharray="3.2 2.4" opacity="0.9"/>
<polyline points="740.0,260.0 760.0,240.0 790.0,220.0 810.0,210.0" fill="none" stroke="#d8b878" stroke-width="0.80" stroke-linejoin="round" stroke-linecap="round" stroke-dasharray="3.2 2.4" opacity="0.9"/>
<polyline points="545.0,550.0 560.0,555.0 575.0,570.0" fill="none" stroke="#d8b878" stroke-width="0.80" stroke-linejoin="round" stroke-linecap="round" stroke-dasharray="3.2 2.4" opacity="0.9"/>
<polyline points="940.0,450.0 970.0,445.0 990.0,440.0" fill="none" stroke="#d8b878" stroke-width="0.80" stroke-linejoin="round" stroke-linecap="round" stroke-dasharray="3.2 2.4" opacity="0.9"/>
<polyline points="560.0,520.0 580.0,525.0 600.0,545.0" fill="none" stroke="#d8b878" stroke-width="0.80" stroke-linejoin="round" stroke-linecap="round" stroke-dasharray="3.2 2.4" opacity="0.9"/>
<polyline points="650.0,600.0 660.0,625.0 670.0,640.0" fill="none" stroke="#d8b878" stroke-width="0.80" stroke-linejoin="round" stroke-linecap="round" stroke-dasharray="3.2 2.4" opacity="0.9"/>
<polyline points="471.0,700.0 490.0,690.0 510.0,675.0" fill="none" stroke="#d8b878" stroke-width="0.80" stroke-linejoin="round" stroke-linecap="round" stroke-dasharray="3.2 2.4" opacity="0.9"/>
<polyline points="774.0,267.7 781.8,281.0 794.9,291.7" fill="none" stroke="#c9a46a" stroke-width="0.90" stroke-linejoin="round" stroke-linecap="round" />
<polyline points="713.1,484.2 710.4,494.1 702.0,499.8 697.1,507.6" fill="none" stroke="#c9a46a" stroke-width="0.90" stroke-linejoin="round" stroke-linecap="round" />
<polyline points="746.3,481.3 738.1,489.9 732.6,501.2 727.7,509.8" fill="none" stroke="#c9a46a" stroke-width="0.90" stroke-linejoin="round" stroke-linecap="round" />
<polyline points="738.8,486.2 761.3,468.5" fill="none" stroke="#c9a46a" stroke-width="0.90" stroke-linejoin="round" stroke-linecap="round" />
<polyline points="610.3,138.3 634.2,164.4 648.3,181.8 653.8,199.2" fill="none" stroke="#c9a46a" stroke-width="0.90" stroke-linejoin="round" stroke-linecap="round" />
<polyline points="795.0,188.0 820.0,195.0 845.0,210.0" fill="none" stroke="#c9a46a" stroke-width="0.90" stroke-linejoin="round" stroke-linecap="round" />
<polyline points="571.0,639.0 600.0,633.0 640.0,630.0 645.0,634.0" fill="none" stroke="#c9a46a" stroke-width="0.90" stroke-linejoin="round" stroke-linecap="round" />
<polyline points="617.3,228.9 609.0,241.9" fill="none" stroke="#b79bbd" stroke-width="0.90" stroke-linejoin="round" stroke-linecap="round" stroke-dasharray="1.2 2.2" opacity="0.8"/>
<polyline points="616.5,281.1 636.0,279.6" fill="none" stroke="#b79bbd" stroke-width="0.90" stroke-linejoin="round" stroke-linecap="round" stroke-dasharray="1.2 2.2" opacity="0.8"/>
<polyline points="616.5,288.0 621.8,298.4 607.4,314.4 594.3,311.8 581.2,321.0" fill="none" stroke="#b79bbd" stroke-width="0.90" stroke-linejoin="round" stroke-linecap="round" stroke-dasharray="1.2 2.2" opacity="0.8"/>
<polyline points="581.2,322.6 607.4,351.2 602.2,345.6 613.9,361.7 618.5,370.4 613.9,375.0 615.2,383.0 630.8,400.5 630.8,404.5 623.0,411.1 624.3,416.5 628.9,422.5 619.1,429.9 620.4,436.6 617.8,439.2 620.4,447.2 630.8,456.6 638.7,460.6 641.3,468.5" fill="none" stroke="#b79bbd" stroke-width="0.90" stroke-linejoin="round" stroke-linecap="round" stroke-dasharray="1.2 2.2" opacity="0.8"/>
<polyline points="617.8,439.2 638.7,425.8 646.5,417.8 662.2,414.4 672.6,399.1 680.5,398.5" fill="none" stroke="#b79bbd" stroke-width="0.90" stroke-linejoin="round" stroke-linecap="round" stroke-dasharray="1.2 2.2" opacity="0.8"/>
<polyline points="738.0,380.4 731.4,396.4 722.3,407.1 704.0,421.2 693.5,411.1" fill="none" stroke="#b79bbd" stroke-width="0.90" stroke-linejoin="round" stroke-linecap="round" stroke-dasharray="1.2 2.2" opacity="0.8"/>
<polyline points="796.2,356.3 806.7,363.0 814.6,377.7 823.6,385.7 830.2,396.4 838.0,395.1 847.2,397.8 858.9,397.8 882.4,396.4 899.1,387.1" fill="none" stroke="#b79bbd" stroke-width="0.90" stroke-linejoin="round" stroke-linecap="round" stroke-dasharray="1.2 2.2" opacity="0.8"/>
<polyline points="738.8,380.4 750.6,384.4 755.7,377.7 776.7,375.0 793.6,357.7" fill="none" stroke="#b79bbd" stroke-width="0.90" stroke-linejoin="round" stroke-linecap="round" stroke-dasharray="1.2 2.2" opacity="0.8"/>
<polyline points="858.8,402.5 870.7,418.5 877.2,428.5 896.3,441.6" fill="none" stroke="#b79bbd" stroke-width="0.90" stroke-linejoin="round" stroke-linecap="round" stroke-dasharray="1.2 2.2" opacity="0.8"/>
<polyline points="866.7,232.7 867.8,253.5" fill="none" stroke="#b79bbd" stroke-width="0.90" stroke-linejoin="round" stroke-linecap="round" stroke-dasharray="1.2 2.2" opacity="0.8"/>
<polyline points="874.6,291.9 875.9,308.8 871.9,314.4 881.1,317.2 886.3,331.8 887.7,345.6" fill="none" stroke="#b79bbd" stroke-width="0.90" stroke-linejoin="round" stroke-linecap="round" stroke-dasharray="1.2 2.2" opacity="0.8"/>
<polyline points="634.0,501.2 646.5,505.5 652.1,511.1 647.9,519.7 664.5,533.9 667.3,541.0 678.4,548.1 681.2,553.8" fill="none" stroke="#b79bbd" stroke-width="0.90" stroke-linejoin="round" stroke-linecap="round" stroke-dasharray="1.2 2.2" opacity="0.8"/>
<polyline points="656.2,570.8 661.7,580.8 681.2,590.7" fill="none" stroke="#b79bbd" stroke-width="0.90" stroke-linejoin="round" stroke-linecap="round" stroke-dasharray="1.2 2.2" opacity="0.8"/>
<polyline points="732.8,340.2 753.8,328.7 761.3,314.9" fill="none" stroke="#b79bbd" stroke-width="0.90" stroke-linejoin="round" stroke-linecap="round" stroke-dasharray="1.2 2.2" opacity="0.8"/>
<polyline points="753.8,285.7 776.3,262.7 815.3,233.5" fill="none" stroke="#b79bbd" stroke-width="0.90" stroke-linejoin="round" stroke-linecap="round" stroke-dasharray="1.2 2.2" opacity="0.8"/>
<polyline points="471.0,197.0 514.5,153.5 534.0,134.0 545.0,138.3" fill="none" stroke="#b79bbd" stroke-width="0.90" stroke-linejoin="round" stroke-linecap="round" stroke-dasharray="1.2 2.2" opacity="0.8"/>
<polyline points="575.4,166.6 592.8,177.4 621.1,212.3 616.8,216.6 627.7,227.5 592.8,262.3 618.9,295.0" fill="none" stroke="#b79bbd" stroke-width="0.90" stroke-linejoin="round" stroke-linecap="round" stroke-dasharray="1.2 2.2" opacity="0.8"/>
<polyline points="621.1,212.3 651.6,199.2 653.8,192.7 648.3,181.8 662.5,173.1 671.2,160.0 662.5,116.5" fill="none" stroke="#b79bbd" stroke-width="0.90" stroke-linejoin="round" stroke-linecap="round" stroke-dasharray="1.2 2.2" opacity="0.8"/>
<polyline points="896.0,550.0 900.0,575.0 904.0,600.0 908.0,625.0 912.0,650.0" fill="none" stroke="#b79bbd" stroke-width="0.90" stroke-linejoin="round" stroke-linecap="round" stroke-dasharray="1.2 2.2" opacity="0.8"/>
<polyline points="465.0,622.0 471.0,619.8 490.0,610.0 511.3,601.9 538.2,604.1 578.5,608.6 614.4,600.7 622.9,594.2 645.1,578.0 667.3,563.7 692.3,550.2 714.5,541.0 731.1,536.0 746.3,534.6 766.5,532.5 794.3,524.7 816.5,517.5 849.8,506.1 872.0,503.3 883.1,504.8 898.4,501.9 905.0,501.0 912.0,502.7 907.0,480.0 898.0,459.0 925.0,464.0 957.5,469.6 985.0,475.0 1010.0,480.0" fill="none" stroke="#cfb3d0" stroke-width="2.40" stroke-linejoin="round" stroke-linecap="round" opacity="0.95"/>
<polyline points="465.0,622.0 471.0,619.8 490.0,610.0 511.3,601.9 538.2,604.1 578.5,608.6 614.4,600.7 622.9,594.2 645.1,578.0 667.3,563.7 692.3,550.2 714.5,541.0 731.1,536.0 746.3,534.6 766.5,532.5 794.3,524.7 816.5,517.5 849.8,506.1 872.0,503.3 883.1,504.8 898.4,501.9 905.0,501.0 912.0,502.7 907.0,480.0 898.0,459.0 925.0,464.0 957.5,469.6 985.0,475.0 1010.0,480.0" fill="none" stroke="#a886ad" stroke-width="0.70" stroke-linejoin="round" stroke-linecap="round" stroke-dasharray="5 1.5 1 1.5"/>
<polyline points="941.0,110.0 940.0,150.0 930.0,200.0 914.0,232.0 883.6,268.8 864.1,291.7 861.5,303.8 864.1,319.8 869.3,339.9 871.9,351.2" fill="none" stroke="#8fc6a0" stroke-width="1.80" stroke-linejoin="round" stroke-linecap="round" />
<polyline points="941.0,110.0 940.0,150.0 930.0,200.0 914.0,232.0 883.6,268.8 864.1,291.7 861.5,303.8 864.1,319.8 869.3,339.9 871.9,351.2" fill="none" stroke="#46809a" stroke-width="0.90" stroke-linejoin="round" stroke-linecap="round" stroke-dasharray="1.5 1.3"/>
<polyline points="641.3,231.6 658.3,255.6 684.4,265.0" fill="none" stroke="#d6d6cd" stroke-width="2.10" stroke-linejoin="round" stroke-linecap="round" opacity="0.85"/>
<polyline points="660.9,226.6 658.3,255.6 644.0,279.6 621.8,298.4 607.4,314.4 598.2,327.8 591.7,351.2 587.8,345.6 590.4,359.0 585.1,371.0" fill="none" stroke="#d6d6cd" stroke-width="2.10" stroke-linejoin="round" stroke-linecap="round" opacity="0.85"/>
<polyline points="684.4,265.0 711.8,259.6" fill="none" stroke="#d6d6cd" stroke-width="2.10" stroke-linejoin="round" stroke-linecap="round" opacity="0.85"/>
<polyline points="684.4,265.0 688.3,282.3 698.8,298.4 704.0,305.8" fill="none" stroke="#d6d6cd" stroke-width="2.10" stroke-linejoin="round" stroke-linecap="round" opacity="0.85"/>
<polyline points="646.5,285.0 684.4,266.3" fill="none" stroke="#d6d6cd" stroke-width="2.10" stroke-linejoin="round" stroke-linecap="round" opacity="0.85"/>
<polyline points="680.5,327.8 664.8,341.2 646.5,351.2 644.0,353.6 617.8,361.7 581.2,371.7" fill="none" stroke="#d6d6cd" stroke-width="2.10" stroke-linejoin="round" stroke-linecap="round" opacity="0.85"/>
<polyline points="681.8,327.8 696.2,331.8 709.2,339.9" fill="none" stroke="#d6d6cd" stroke-width="2.10" stroke-linejoin="round" stroke-linecap="round" opacity="0.85"/>
<polyline points="581.2,252.9 590.2,259.6" fill="none" stroke="#d6d6cd" stroke-width="2.10" stroke-linejoin="round" stroke-linecap="round" opacity="0.85"/>
<polyline points="581.2,306.5 598.2,327.8" fill="none" stroke="#d6d6cd" stroke-width="2.10" stroke-linejoin="round" stroke-linecap="round" opacity="0.85"/>
<polyline points="683.1,252.9 704.0,247.6 702.7,236.9 685.7,231.6" fill="none" stroke="#d6d6cd" stroke-width="2.10" stroke-linejoin="round" stroke-linecap="round" opacity="0.85"/>
<polyline points="831.5,257.0 843.3,273.0 849.8,295.7 853.7,315.7 853.7,335.9" fill="none" stroke="#d6d6cd" stroke-width="2.10" stroke-linejoin="round" stroke-linecap="round" opacity="0.85"/>
<polyline points="830.2,261.0 817.1,278.3 794.9,294.4 791.0,298.4" fill="none" stroke="#d6d6cd" stroke-width="2.10" stroke-linejoin="round" stroke-linecap="round" opacity="0.85"/>
<polyline points="738.8,266.3 751.8,262.3 772.8,255.6 789.7,257.0" fill="none" stroke="#d6d6cd" stroke-width="2.10" stroke-linejoin="round" stroke-linecap="round" opacity="0.85"/>
<polyline points="899.1,309.1 853.7,323.8 836.7,334.5 811.9,347.8 802.8,353.6 811.9,369.7 823.6,385.0 830.2,380.4 835.4,348.3 851.1,347.6" fill="none" stroke="#d6d6cd" stroke-width="2.10" stroke-linejoin="round" stroke-linecap="round" opacity="0.85"/>
<polyline points="757.5,282.6 772.5,295.7 787.5,299.5 798.8,291.9 810.8,301.1 821.3,314.9 836.7,334.5" fill="none" stroke="#d6d6cd" stroke-width="2.10" stroke-linejoin="round" stroke-linecap="round" opacity="0.85"/>
<polyline points="770.3,314.9 787.5,299.5" fill="none" stroke="#d6d6cd" stroke-width="2.10" stroke-linejoin="round" stroke-linecap="round" opacity="0.85"/>
<polyline points="798.8,291.9 804.8,307.2 818.3,302.6" fill="none" stroke="#d6d6cd" stroke-width="2.10" stroke-linejoin="round" stroke-linecap="round" opacity="0.85"/>
<polyline points="581.2,385.7 589.0,401.8 591.7,415.1 589.0,423.2 598.2,432.5 615.2,437.9 619.1,444.5 615.2,452.6 613.9,468.0 615.2,482.7 613.2,496.9 612.5,516.8" fill="none" stroke="#d6d6cd" stroke-width="2.10" stroke-linejoin="round" stroke-linecap="round" opacity="0.85"/>
<polyline points="625.7,389.7 633.5,396.4 654.4,385.7 672.6,376.3 677.9,377.7" fill="none" stroke="#d6d6cd" stroke-width="2.10" stroke-linejoin="round" stroke-linecap="round" opacity="0.85"/>
<polyline points="667.4,368.4 672.6,376.3 685.7,371.0 711.8,356.3 722.3,351.0" fill="none" stroke="#d6d6cd" stroke-width="2.10" stroke-linejoin="round" stroke-linecap="round" opacity="0.85"/>
<polyline points="677.9,377.7 680.5,395.1 672.6,401.8 667.4,412.4" fill="none" stroke="#d6d6cd" stroke-width="2.10" stroke-linejoin="round" stroke-linecap="round" opacity="0.85"/>
<polyline points="680.5,395.1 696.2,399.1 711.8,385.7 724.9,372.4 746.3,361.7 758.4,353.3 781.8,349.5 794.9,348.3" fill="none" stroke="#d6d6cd" stroke-width="2.10" stroke-linejoin="round" stroke-linecap="round" opacity="0.85"/>
<polyline points="696.2,401.8 685.7,415.1 683.1,425.8 687.0,433.9 680.5,439.2 676.6,452.6 675.2,459.3 671.3,483.9" fill="none" stroke="#d6d6cd" stroke-width="2.10" stroke-linejoin="round" stroke-linecap="round" opacity="0.85"/>
<polyline points="687.0,433.9 705.3,428.5 724.9,420.5 746.3,409.8" fill="none" stroke="#d6d6cd" stroke-width="2.10" stroke-linejoin="round" stroke-linecap="round" opacity="0.85"/>
<polyline points="713.1,468.5 724.9,452.6 735.3,444.5" fill="none" stroke="#d6d6cd" stroke-width="2.10" stroke-linejoin="round" stroke-linecap="round" opacity="0.85"/>
<polyline points="738.8,404.5 758.4,381.7 781.8,363.0 794.9,348.3" fill="none" stroke="#d6d6cd" stroke-width="2.10" stroke-linejoin="round" stroke-linecap="round" opacity="0.85"/>
<polyline points="851.1,345.6 860.2,359.0 862.9,372.4 858.9,389.7 856.9,420.5 858.9,431.2 851.1,452.6 844.6,468.5 841.5,474.2 831.8,487.0 822.1,492.7 811.0,499.8 804.1,506.9 775.5,519.7" fill="none" stroke="#d6d6cd" stroke-width="2.10" stroke-linejoin="round" stroke-linecap="round" opacity="0.85"/>
<polyline points="753.8,422.4 770.1,421.2 797.5,418.5 823.6,417.8 843.3,420.5 856.9,421.8 870.7,418.5 877.2,428.5 899.1,418.5" fill="none" stroke="#d6d6cd" stroke-width="2.10" stroke-linejoin="round" stroke-linecap="round" opacity="0.85"/>
<polyline points="877.2,428.5 895.5,441.9 903.8,447.8" fill="none" stroke="#d6d6cd" stroke-width="2.10" stroke-linejoin="round" stroke-linecap="round" opacity="0.85"/>
<polyline points="581.2,504.1 609.0,516.8 625.7,526.8 636.8,531.7 653.4,533.9 675.6,534.6 689.5,539.6 700.6,545.9" fill="none" stroke="#d6d6cd" stroke-width="2.10" stroke-linejoin="round" stroke-linecap="round" opacity="0.85"/>
<polyline points="593.0,518.3 616.0,532.5 622.9,548.1 632.6,559.4 642.3,573.7 645.8,582.2 646.5,594.2 646.5,614.4" fill="none" stroke="#d6d6cd" stroke-width="2.10" stroke-linejoin="round" stroke-linecap="round" opacity="0.85"/>
<polyline points="653.4,533.9 639.5,548.1 632.6,559.4 620.1,572.3 607.7,580.8" fill="none" stroke="#d6d6cd" stroke-width="2.10" stroke-linejoin="round" stroke-linecap="round" opacity="0.85"/>
<polyline points="686.3,603.7 696.5,594.2 714.5,578.0 733.9,560.9" fill="none" stroke="#d6d6cd" stroke-width="2.10" stroke-linejoin="round" stroke-linecap="round" opacity="0.85"/>
<polyline points="708.9,471.4 713.1,484.2" fill="none" stroke="#d6d6cd" stroke-width="2.10" stroke-linejoin="round" stroke-linecap="round" opacity="0.85"/>
<polyline points="768.0,468.5 771.4,489.9 773.5,511.1 775.5,519.7 776.3,528.2" fill="none" stroke="#d6d6cd" stroke-width="2.10" stroke-linejoin="round" stroke-linecap="round" opacity="0.85"/>
<polyline points="802.6,556.6 811.0,549.5 829.0,545.9 844.3,542.4 863.7,535.3 885.9,531.7 891.4,542.4 898.4,559.4 903.8,576.0" fill="none" stroke="#d6d6cd" stroke-width="2.10" stroke-linejoin="round" stroke-linecap="round" opacity="0.85"/>
<polyline points="761.3,445.5 770.3,459.3 780.8,462.4" fill="none" stroke="#d6d6cd" stroke-width="2.10" stroke-linejoin="round" stroke-linecap="round" opacity="0.85"/>
<polyline points="777.8,468.5 788.3,457.8 797.3,462.4" fill="none" stroke="#d6d6cd" stroke-width="2.10" stroke-linejoin="round" stroke-linecap="round" opacity="0.85"/>
<polyline points="536.3,212.3 562.4,203.6 586.3,199.2" fill="none" stroke="#d6d6cd" stroke-width="2.10" stroke-linejoin="round" stroke-linecap="round" opacity="0.85"/>
<polyline points="575.4,131.8 592.8,157.9 623.3,205.7 643.9,232.7" fill="none" stroke="#d6d6cd" stroke-width="2.10" stroke-linejoin="round" stroke-linecap="round" opacity="0.85"/>
<polyline points="636.4,114.4 666.8,160.0 677.7,181.8 693.0,186.2" fill="none" stroke="#d6d6cd" stroke-width="2.10" stroke-linejoin="round" stroke-linecap="round" opacity="0.85"/>
<polyline points="663.0,227.7 662.5,223.1 688.6,192.7 741.0,164.4 781.5,150.0" fill="none" stroke="#d6d6cd" stroke-width="2.10" stroke-linejoin="round" stroke-linecap="round" opacity="0.85"/>
<polyline points="514.5,251.0 558.0,273.0 566.7,297.0 580.0,310.0 590.0,330.0" fill="none" stroke="#d6d6cd" stroke-width="2.10" stroke-linejoin="round" stroke-linecap="round" opacity="0.85"/>
<polyline points="471.0,284.0 481.9,310.0 490.0,340.0 497.0,380.0 503.0,420.0 497.0,450.0 488.0,470.0" fill="none" stroke="#d6d6cd" stroke-width="2.10" stroke-linejoin="round" stroke-linecap="round" opacity="0.85"/>
<polyline points="503.0,420.0 520.0,405.0 560.0,385.0 585.5,372.0" fill="none" stroke="#d6d6cd" stroke-width="2.10" stroke-linejoin="round" stroke-linecap="round" opacity="0.85"/>
<polyline points="578.0,366.0 585.5,385.9" fill="none" stroke="#d6d6cd" stroke-width="2.10" stroke-linejoin="round" stroke-linecap="round" opacity="0.85"/>
<polyline points="781.5,150.0 760.0,140.0 745.0,120.0 738.0,110.0" fill="none" stroke="#d6d6cd" stroke-width="2.10" stroke-linejoin="round" stroke-linecap="round" opacity="0.85"/>
<polyline points="901.0,117.0 905.0,130.0 890.0,145.0 880.0,160.0" fill="none" stroke="#d6d6cd" stroke-width="2.10" stroke-linejoin="round" stroke-linecap="round" opacity="0.85"/>
<polyline points="940.0,110.0 945.0,125.0 955.6,155.0" fill="none" stroke="#d6d6cd" stroke-width="2.10" stroke-linejoin="round" stroke-linecap="round" opacity="0.85"/>
<polyline points="895.0,262.0 905.0,285.0 930.0,300.0 960.0,330.0 985.0,345.0" fill="none" stroke="#d6d6cd" stroke-width="2.10" stroke-linejoin="round" stroke-linecap="round" opacity="0.85"/>
<polyline points="905.0,265.0 900.0,290.0 905.0,310.0" fill="none" stroke="#d6d6cd" stroke-width="2.10" stroke-linejoin="round" stroke-linecap="round" opacity="0.85"/>
<polyline points="985.0,345.0 970.0,370.0 955.0,395.0 930.0,410.0 900.0,420.0" fill="none" stroke="#d6d6cd" stroke-width="2.10" stroke-linejoin="round" stroke-linecap="round" opacity="0.85"/>
<polyline points="985.0,345.0 1000.0,330.0" fill="none" stroke="#d6d6cd" stroke-width="2.10" stroke-linejoin="round" stroke-linecap="round" opacity="0.85"/>
<polyline points="880.0,160.0 870.0,180.0 850.0,200.0" fill="none" stroke="#d6d6cd" stroke-width="2.10" stroke-linejoin="round" stroke-linecap="round" opacity="0.85"/>
<polyline points="955.0,395.0 975.0,420.0 1000.0,450.0" fill="none" stroke="#d6d6cd" stroke-width="2.10" stroke-linejoin="round" stroke-linecap="round" opacity="0.85"/>
<polyline points="471.0,555.0 490.0,575.0 500.0,600.0 520.0,640.0 535.0,660.0 542.7,687.0" fill="none" stroke="#d6d6cd" stroke-width="2.10" stroke-linejoin="round" stroke-linecap="round" opacity="0.85"/>
<polyline points="471.0,660.0 500.0,665.0 530.0,680.0 542.7,687.0" fill="none" stroke="#d6d6cd" stroke-width="2.10" stroke-linejoin="round" stroke-linecap="round" opacity="0.85"/>
<polyline points="495.0,715.0 520.0,700.0 535.0,680.0" fill="none" stroke="#d6d6cd" stroke-width="2.10" stroke-linejoin="round" stroke-linecap="round" opacity="0.85"/>
<polyline points="690.0,600.0 710.0,625.0 735.0,650.0" fill="none" stroke="#d6d6cd" stroke-width="2.10" stroke-linejoin="round" stroke-linecap="round" opacity="0.85"/>
<polyline points="565.0,625.0 580.0,655.0 590.0,675.0" fill="none" stroke="#d6d6cd" stroke-width="2.10" stroke-linejoin="round" stroke-linecap="round" opacity="0.85"/>
<polyline points="608.0,640.0 625.0,670.0 640.0,700.0 650.0,715.0" fill="none" stroke="#d6d6cd" stroke-width="2.10" stroke-linejoin="round" stroke-linecap="round" opacity="0.85"/>
<polyline points="700.0,650.0 720.0,625.0 741.0,610.0 760.0,595.0" fill="none" stroke="#d6d6cd" stroke-width="2.10" stroke-linejoin="round" stroke-linecap="round" opacity="0.85"/>
<polyline points="741.0,560.0 770.0,600.0 800.0,605.0 830.0,600.0 850.0,598.0" fill="none" stroke="#d6d6cd" stroke-width="2.10" stroke-linejoin="round" stroke-linecap="round" opacity="0.85"/>
<polyline points="738.0,620.0 760.0,610.0 790.0,600.0" fill="none" stroke="#d6d6cd" stroke-width="2.10" stroke-linejoin="round" stroke-linecap="round" opacity="0.85"/>
<polyline points="800.0,640.0 830.0,650.0 860.0,640.0 880.0,625.0" fill="none" stroke="#d6d6cd" stroke-width="2.10" stroke-linejoin="round" stroke-linecap="round" opacity="0.85"/>
<polyline points="840.0,650.0 835.0,680.0 830.0,700.0" fill="none" stroke="#d6d6cd" stroke-width="2.10" stroke-linejoin="round" stroke-linecap="round" opacity="0.85"/>
<polyline points="880.0,620.0 890.0,660.0 900.0,690.0 905.0,715.0" fill="none" stroke="#d6d6cd" stroke-width="2.10" stroke-linejoin="round" stroke-linecap="round" opacity="0.85"/>
<polyline points="920.0,640.0 960.0,635.0 1000.0,630.0 1010.0,628.0" fill="none" stroke="#d6d6cd" stroke-width="2.10" stroke-linejoin="round" stroke-linecap="round" opacity="0.85"/>
<polyline points="940.0,560.0 950.0,540.0 945.0,520.0" fill="none" stroke="#d6d6cd" stroke-width="2.10" stroke-linejoin="round" stroke-linecap="round" opacity="0.85"/>
<polyline points="1000.0,580.0 1010.0,600.0" fill="none" stroke="#d6d6cd" stroke-width="2.10" stroke-linejoin="round" stroke-linecap="round" opacity="0.85"/>
<polyline points="746.3,279.6 724.9,286.3 704.0,305.8 680.5,327.8" fill="none" stroke="#c4c4bb" stroke-width="3.00" stroke-linejoin="round" stroke-linecap="round" />
<polyline points="523.2,214.4 542.8,186.2 558.0,170.9 566.7,166.6" fill="none" stroke="#c4c4bb" stroke-width="3.00" stroke-linejoin="round" stroke-linecap="round" />
<polyline points="471.0,279.7 492.8,260.1 512.3,238.4 523.2,214.4" fill="none" stroke="#c4c4bb" stroke-width="3.00" stroke-linejoin="round" stroke-linecap="round" />
<polyline points="781.5,105.0 781.5,150.0 793.0,185.0 802.0,205.0 815.8,231.6 831.5,257.0 856.3,261.6 874.6,262.3" fill="none" stroke="#c4c4bb" stroke-width="3.00" stroke-linejoin="round" stroke-linecap="round" />
<polyline points="781.5,150.0 825.0,143.0 860.0,130.0 901.0,117.0 912.0,120.0 927.3,150.0 955.6,155.0 1010.0,158.0" fill="none" stroke="#c4c4bb" stroke-width="3.00" stroke-linejoin="round" stroke-linecap="round" />
<polyline points="793.0,185.0 780.0,195.0 762.0,203.0 752.0,215.0 750.0,232.0 746.3,241.9 742.5,249.6 731.3,257.3 720.0,262.7 711.8,259.6" fill="none" stroke="#c4c4bb" stroke-width="3.00" stroke-linejoin="round" stroke-linecap="round" />
<polyline points="965.0,110.0 975.0,130.0 985.0,150.0 1000.0,160.0" fill="none" stroke="#c4c4bb" stroke-width="3.00" stroke-linejoin="round" stroke-linecap="round" />
<polyline points="1010.0,305.0 1000.0,330.0 996.0,360.0 994.0,395.0 1002.0,430.0 1006.0,470.0 1000.0,500.0 990.0,510.0" fill="none" stroke="#c4c4bb" stroke-width="3.00" stroke-linejoin="round" stroke-linecap="round" />
<polyline points="471.0,168.7 484.0,181.8 495.0,201.4 501.5,214.4" fill="none" stroke="#c4c4bb" stroke-width="3.00" stroke-linejoin="round" stroke-linecap="round" />
<polyline points="641.3,231.6 658.3,255.6 684.4,265.0" fill="none" stroke="#fbfbf7" stroke-width="1.25" stroke-linejoin="round" stroke-linecap="round" opacity="0.92"/>
<polyline points="660.9,226.6 658.3,255.6 644.0,279.6 621.8,298.4 607.4,314.4 598.2,327.8 591.7,351.2 587.8,345.6 590.4,359.0 585.1,371.0" fill="none" stroke="#fbfbf7" stroke-width="1.25" stroke-linejoin="round" stroke-linecap="round" opacity="0.92"/>
<polyline points="684.4,265.0 711.8,259.6" fill="none" stroke="#fbfbf7" stroke-width="1.25" stroke-linejoin="round" stroke-linecap="round" opacity="0.92"/>
<polyline points="684.4,265.0 688.3,282.3 698.8,298.4 704.0,305.8" fill="none" stroke="#fbfbf7" stroke-width="1.25" stroke-linejoin="round" stroke-linecap="round" opacity="0.92"/>
<polyline points="646.5,285.0 684.4,266.3" fill="none" stroke="#fbfbf7" stroke-width="1.25" stroke-linejoin="round" stroke-linecap="round" opacity="0.92"/>
<polyline points="680.5,327.8 664.8,341.2 646.5,351.2 644.0,353.6 617.8,361.7 581.2,371.7" fill="none" stroke="#fbfbf7" stroke-width="1.25" stroke-linejoin="round" stroke-linecap="round" opacity="0.92"/>
<polyline points="681.8,327.8 696.2,331.8 709.2,339.9" fill="none" stroke="#fbfbf7" stroke-width="1.25" stroke-linejoin="round" stroke-linecap="round" opacity="0.92"/>
<polyline points="581.2,252.9 590.2,259.6" fill="none" stroke="#fbfbf7" stroke-width="1.25" stroke-linejoin="round" stroke-linecap="round" opacity="0.92"/>
<polyline points="581.2,306.5 598.2,327.8" fill="none" stroke="#fbfbf7" stroke-width="1.25" stroke-linejoin="round" stroke-linecap="round" opacity="0.92"/>
<polyline points="683.1,252.9 704.0,247.6 702.7,236.9 685.7,231.6" fill="none" stroke="#fbfbf7" stroke-width="1.25" stroke-linejoin="round" stroke-linecap="round" opacity="0.92"/>
<polyline points="831.5,257.0 843.3,273.0 849.8,295.7 853.7,315.7 853.7,335.9" fill="none" stroke="#fbfbf7" stroke-width="1.25" stroke-linejoin="round" stroke-linecap="round" opacity="0.92"/>
<polyline points="830.2,261.0 817.1,278.3 794.9,294.4 791.0,298.4" fill="none" stroke="#fbfbf7" stroke-width="1.25" stroke-linejoin="round" stroke-linecap="round" opacity="0.92"/>
<polyline points="738.8,266.3 751.8,262.3 772.8,255.6 789.7,257.0" fill="none" stroke="#fbfbf7" stroke-width="1.25" stroke-linejoin="round" stroke-linecap="round" opacity="0.92"/>
<polyline points="899.1,309.1 853.7,323.8 836.7,334.5 811.9,347.8 802.8,353.6 811.9,369.7 823.6,385.0 830.2,380.4 835.4,348.3 851.1,347.6" fill="none" stroke="#fbfbf7" stroke-width="1.25" stroke-linejoin="round" stroke-linecap="round" opacity="0.92"/>
<polyline points="757.5,282.6 772.5,295.7 787.5,299.5 798.8,291.9 810.8,301.1 821.3,314.9 836.7,334.5" fill="none" stroke="#fbfbf7" stroke-width="1.25" stroke-linejoin="round" stroke-linecap="round" opacity="0.92"/>
<polyline points="770.3,314.9 787.5,299.5" fill="none" stroke="#fbfbf7" stroke-width="1.25" stroke-linejoin="round" stroke-linecap="round" opacity="0.92"/>
<polyline points="798.8,291.9 804.8,307.2 818.3,302.6" fill="none" stroke="#fbfbf7" stroke-width="1.25" stroke-linejoin="round" stroke-linecap="round" opacity="0.92"/>
<polyline points="581.2,385.7 589.0,401.8 591.7,415.1 589.0,423.2 598.2,432.5 615.2,437.9 619.1,444.5 615.2,452.6 613.9,468.0 615.2,482.7 613.2,496.9 612.5,516.8" fill="none" stroke="#fbfbf7" stroke-width="1.25" stroke-linejoin="round" stroke-linecap="round" opacity="0.92"/>
<polyline points="625.7,389.7 633.5,396.4 654.4,385.7 672.6,376.3 677.9,377.7" fill="none" stroke="#fbfbf7" stroke-width="1.25" stroke-linejoin="round" stroke-linecap="round" opacity="0.92"/>
<polyline points="667.4,368.4 672.6,376.3 685.7,371.0 711.8,356.3 722.3,351.0" fill="none" stroke="#fbfbf7" stroke-width="1.25" stroke-linejoin="round" stroke-linecap="round" opacity="0.92"/>
<polyline points="677.9,377.7 680.5,395.1 672.6,401.8 667.4,412.4" fill="none" stroke="#fbfbf7" stroke-width="1.25" stroke-linejoin="round" stroke-linecap="round" opacity="0.92"/>
<polyline points="680.5,395.1 696.2,399.1 711.8,385.7 724.9,372.4 746.3,361.7 758.4,353.3 781.8,349.5 794.9,348.3" fill="none" stroke="#fbfbf7" stroke-width="1.25" stroke-linejoin="round" stroke-linecap="round" opacity="0.92"/>
<polyline points="696.2,401.8 685.7,415.1 683.1,425.8 687.0,433.9 680.5,439.2 676.6,452.6 675.2,459.3 671.3,483.9" fill="none" stroke="#fbfbf7" stroke-width="1.25" stroke-linejoin="round" stroke-linecap="round" opacity="0.92"/>
<polyline points="687.0,433.9 705.3,428.5 724.9,420.5 746.3,409.8" fill="none" stroke="#fbfbf7" stroke-width="1.25" stroke-linejoin="round" stroke-linecap="round" opacity="0.92"/>
<polyline points="713.1,468.5 724.9,452.6 735.3,444.5" fill="none" stroke="#fbfbf7" stroke-width="1.25" stroke-linejoin="round" stroke-linecap="round" opacity="0.92"/>
<polyline points="738.8,404.5 758.4,381.7 781.8,363.0 794.9,348.3" fill="none" stroke="#fbfbf7" stroke-width="1.25" stroke-linejoin="round" stroke-linecap="round" opacity="0.92"/>
<polyline points="851.1,345.6 860.2,359.0 862.9,372.4 858.9,389.7 856.9,420.5 858.9,431.2 851.1,452.6 844.6,468.5 841.5,474.2 831.8,487.0 822.1,492.7 811.0,499.8 804.1,506.9 775.5,519.7" fill="none" stroke="#fbfbf7" stroke-width="1.25" stroke-linejoin="round" stroke-linecap="round" opacity="0.92"/>
<polyline points="753.8,422.4 770.1,421.2 797.5,418.5 823.6,417.8 843.3,420.5 856.9,421.8 870.7,418.5 877.2,428.5 899.1,418.5" fill="none" stroke="#fbfbf7" stroke-width="1.25" stroke-linejoin="round" stroke-linecap="round" opacity="0.92"/>
<polyline points="877.2,428.5 895.5,441.9 903.8,447.8" fill="none" stroke="#fbfbf7" stroke-width="1.25" stroke-linejoin="round" stroke-linecap="round" opacity="0.92"/>
<polyline points="581.2,504.1 609.0,516.8 625.7,526.8 636.8,531.7 653.4,533.9 675.6,534.6 689.5,539.6 700.6,545.9" fill="none" stroke="#fbfbf7" stroke-width="1.25" stroke-linejoin="round" stroke-linecap="round" opacity="0.92"/>
<polyline points="593.0,518.3 616.0,532.5 622.9,548.1 632.6,559.4 642.3,573.7 645.8,582.2 646.5,594.2 646.5,614.4" fill="none" stroke="#fbfbf7" stroke-width="1.25" stroke-linejoin="round" stroke-linecap="round" opacity="0.92"/>
<polyline points="653.4,533.9 639.5,548.1 632.6,559.4 620.1,572.3 607.7,580.8" fill="none" stroke="#fbfbf7" stroke-width="1.25" stroke-linejoin="round" stroke-linecap="round" opacity="0.92"/>
<polyline points="686.3,603.7 696.5,594.2 714.5,578.0 733.9,560.9" fill="none" stroke="#fbfbf7" stroke-width="1.25" stroke-linejoin="round" stroke-linecap="round" opacity="0.92"/>
<polyline points="708.9,471.4 713.1,484.2" fill="none" stroke="#fbfbf7" stroke-width="1.25" stroke-linejoin="round" stroke-linecap="round" opacity="0.92"/>
<polyline points="768.0,468.5 771.4,489.9 773.5,511.1 775.5,519.7 776.3,528.2" fill="none" stroke="#fbfbf7" stroke-width="1.25" stroke-linejoin="round" stroke-linecap="round" opacity="0.92"/>
<polyline points="802.6,556.6 811.0,549.5 829.0,545.9 844.3,542.4 863.7,535.3 885.9,531.7 891.4,542.4 898.4,559.4 903.8,576.0" fill="none" stroke="#fbfbf7" stroke-width="1.25" stroke-linejoin="round" stroke-linecap="round" opacity="0.92"/>
<polyline points="761.3,445.5 770.3,459.3 780.8,462.4" fill="none" stroke="#fbfbf7" stroke-width="1.25" stroke-linejoin="round" stroke-linecap="round" opacity="0.92"/>
<polyline points="777.8,468.5 788.3,457.8 797.3,462.4" fill="none" stroke="#fbfbf7" stroke-width="1.25" stroke-linejoin="round" stroke-linecap="round" opacity="0.92"/>
<polyline points="536.3,212.3 562.4,203.6 586.3,199.2" fill="none" stroke="#fbfbf7" stroke-width="1.25" stroke-linejoin="round" stroke-linecap="round" opacity="0.92"/>
<polyline points="575.4,131.8 592.8,157.9 623.3,205.7 643.9,232.7" fill="none" stroke="#fbfbf7" stroke-width="1.25" stroke-linejoin="round" stroke-linecap="round" opacity="0.92"/>
<polyline points="636.4,114.4 666.8,160.0 677.7,181.8 693.0,186.2" fill="none" stroke="#fbfbf7" stroke-width="1.25" stroke-linejoin="round" stroke-linecap="round" opacity="0.92"/>
<polyline points="663.0,227.7 662.5,223.1 688.6,192.7 741.0,164.4 781.5,150.0" fill="none" stroke="#fbfbf7" stroke-width="1.25" stroke-linejoin="round" stroke-linecap="round" opacity="0.92"/>
<polyline points="514.5,251.0 558.0,273.0 566.7,297.0 580.0,310.0 590.0,330.0" fill="none" stroke="#fbfbf7" stroke-width="1.25" stroke-linejoin="round" stroke-linecap="round" opacity="0.92"/>
<polyline points="471.0,284.0 481.9,310.0 490.0,340.0 497.0,380.0 503.0,420.0 497.0,450.0 488.0,470.0" fill="none" stroke="#fbfbf7" stroke-width="1.25" stroke-linejoin="round" stroke-linecap="round" opacity="0.92"/>
<polyline points="503.0,420.0 520.0,405.0 560.0,385.0 585.5,372.0" fill="none" stroke="#fbfbf7" stroke-width="1.25" stroke-linejoin="round" stroke-linecap="round" opacity="0.92"/>
<polyline points="578.0,366.0 585.5,385.9" fill="none" stroke="#fbfbf7" stroke-width="1.25" stroke-linejoin="round" stroke-linecap="round" opacity="0.92"/>
<polyline points="781.5,150.0 760.0,140.0 745.0,120.0 738.0,110.0" fill="none" stroke="#fbfbf7" stroke-width="1.25" stroke-linejoin="round" stroke-linecap="round" opacity="0.92"/>
<polyline points="901.0,117.0 905.0,130.0 890.0,145.0 880.0,160.0" fill="none" stroke="#fbfbf7" stroke-width="1.25" stroke-linejoin="round" stroke-linecap="round" opacity="0.92"/>
<polyline points="940.0,110.0 945.0,125.0 955.6,155.0" fill="none" stroke="#fbfbf7" stroke-width="1.25" stroke-linejoin="round" stroke-linecap="round" opacity="0.92"/>
<polyline points="895.0,262.0 905.0,285.0 930.0,300.0 960.0,330.0 985.0,345.0" fill="none" stroke="#fbfbf7" stroke-width="1.25" stroke-linejoin="round" stroke-linecap="round" opacity="0.92"/>
<polyline points="905.0,265.0 900.0,290.0 905.0,310.0" fill="none" stroke="#fbfbf7" stroke-width="1.25" stroke-linejoin="round" stroke-linecap="round" opacity="0.92"/>
<polyline points="985.0,345.0 970.0,370.0 955.0,395.0 930.0,410.0 900.0,420.0" fill="none" stroke="#fbfbf7" stroke-width="1.25" stroke-linejoin="round" stroke-linecap="round" opacity="0.92"/>
<polyline points="985.0,345.0 1000.0,330.0" fill="none" stroke="#fbfbf7" stroke-width="1.25" stroke-linejoin="round" stroke-linecap="round" opacity="0.92"/>
<polyline points="880.0,160.0 870.0,180.0 850.0,200.0" fill="none" stroke="#fbfbf7" stroke-width="1.25" stroke-linejoin="round" stroke-linecap="round" opacity="0.92"/>
<polyline points="955.0,395.0 975.0,420.0 1000.0,450.0" fill="none" stroke="#fbfbf7" stroke-width="1.25" stroke-linejoin="round" stroke-linecap="round" opacity="0.92"/>
<polyline points="471.0,555.0 490.0,575.0 500.0,600.0 520.0,640.0 535.0,660.0 542.7,687.0" fill="none" stroke="#fbfbf7" stroke-width="1.25" stroke-linejoin="round" stroke-linecap="round" opacity="0.92"/>
<polyline points="471.0,660.0 500.0,665.0 530.0,680.0 542.7,687.0" fill="none" stroke="#fbfbf7" stroke-width="1.25" stroke-linejoin="round" stroke-linecap="round" opacity="0.92"/>
<polyline points="495.0,715.0 520.0,700.0 535.0,680.0" fill="none" stroke="#fbfbf7" stroke-width="1.25" stroke-linejoin="round" stroke-linecap="round" opacity="0.92"/>
<polyline points="690.0,600.0 710.0,625.0 735.0,650.0" fill="none" stroke="#fbfbf7" stroke-width="1.25" stroke-linejoin="round" stroke-linecap="round" opacity="0.92"/>
<polyline points="565.0,625.0 580.0,655.0 590.0,675.0" fill="none" stroke="#fbfbf7" stroke-width="1.25" stroke-linejoin="round" stroke-linecap="round" opacity="0.92"/>
<polyline points="608.0,640.0 625.0,670.0 640.0,700.0 650.0,715.0" fill="none" stroke="#fbfbf7" stroke-width="1.25" stroke-linejoin="round" stroke-linecap="round" opacity="0.92"/>
<polyline points="700.0,650.0 720.0,625.0 741.0,610.0 760.0,595.0" fill="none" stroke="#fbfbf7" stroke-width="1.25" stroke-linejoin="round" stroke-linecap="round" opacity="0.92"/>
<polyline points="741.0,560.0 770.0,600.0 800.0,605.0 830.0,600.0 850.0,598.0" fill="none" stroke="#fbfbf7" stroke-width="1.25" stroke-linejoin="round" stroke-linecap="round" opacity="0.92"/>
<polyline points="738.0,620.0 760.0,610.0 790.0,600.0" fill="none" stroke="#fbfbf7" stroke-width="1.25" stroke-linejoin="round" stroke-linecap="round" opacity="0.92"/>
<polyline points="800.0,640.0 830.0,650.0 860.0,640.0 880.0,625.0" fill="none" stroke="#fbfbf7" stroke-width="1.25" stroke-linejoin="round" stroke-linecap="round" opacity="0.92"/>
<polyline points="840.0,650.0 835.0,680.0 830.0,700.0" fill="none" stroke="#fbfbf7" stroke-width="1.25" stroke-linejoin="round" stroke-linecap="round" opacity="0.92"/>
<polyline points="880.0,620.0 890.0,660.0 900.0,690.0 905.0,715.0" fill="none" stroke="#fbfbf7" stroke-width="1.25" stroke-linejoin="round" stroke-linecap="round" opacity="0.92"/>
<polyline points="920.0,640.0 960.0,635.0 1000.0,630.0 1010.0,628.0" fill="none" stroke="#fbfbf7" stroke-width="1.25" stroke-linejoin="round" stroke-linecap="round" opacity="0.92"/>
<polyline points="940.0,560.0 950.0,540.0 945.0,520.0" fill="none" stroke="#fbfbf7" stroke-width="1.25" stroke-linejoin="round" stroke-linecap="round" opacity="0.92"/>
<polyline points="1000.0,580.0 1010.0,600.0" fill="none" stroke="#fbfbf7" stroke-width="1.25" stroke-linejoin="round" stroke-linecap="round" opacity="0.92"/>
<polyline points="746.3,279.6 724.9,286.3 704.0,305.8 680.5,327.8" fill="none" stroke="#ffffff" stroke-width="2.00" stroke-linejoin="round" stroke-linecap="round" />
<polyline points="523.2,214.4 542.8,186.2 558.0,170.9 566.7,166.6" fill="none" stroke="#ffffff" stroke-width="2.00" stroke-linejoin="round" stroke-linecap="round" />
<polyline points="471.0,279.7 492.8,260.1 512.3,238.4 523.2,214.4" fill="none" stroke="#ffffff" stroke-width="2.00" stroke-linejoin="round" stroke-linecap="round" />
<polyline points="781.5,105.0 781.5,150.0 793.0,185.0 802.0,205.0 815.8,231.6 831.5,257.0 856.3,261.6 874.6,262.3" fill="none" stroke="#ffffff" stroke-width="2.00" stroke-linejoin="round" stroke-linecap="round" />
<polyline points="781.5,150.0 825.0,143.0 860.0,130.0 901.0,117.0 912.0,120.0 927.3,150.0 955.6,155.0 1010.0,158.0" fill="none" stroke="#ffffff" stroke-width="2.00" stroke-linejoin="round" stroke-linecap="round" />
<polyline points="793.0,185.0 780.0,195.0 762.0,203.0 752.0,215.0 750.0,232.0 746.3,241.9 742.5,249.6 731.3,257.3 720.0,262.7 711.8,259.6" fill="none" stroke="#ffffff" stroke-width="2.00" stroke-linejoin="round" stroke-linecap="round" />
<polyline points="965.0,110.0 975.0,130.0 985.0,150.0 1000.0,160.0" fill="none" stroke="#ffffff" stroke-width="2.00" stroke-linejoin="round" stroke-linecap="round" />
<polyline points="1010.0,305.0 1000.0,330.0 996.0,360.0 994.0,395.0 1002.0,430.0 1006.0,470.0 1000.0,500.0 990.0,510.0" fill="none" stroke="#ffffff" stroke-width="2.00" stroke-linejoin="round" stroke-linecap="round" />
<polyline points="471.0,168.7 484.0,181.8 495.0,201.4 501.5,214.4" fill="none" stroke="#ffffff" stroke-width="2.00" stroke-linejoin="round" stroke-linecap="round" />
<polyline points="1015.0,181.0 1008.0,185.0 977.3,205.7 946.9,228.6 912.0,251.4 895.7,254.0 881.1,262.3 869.3,273.0 843.3,294.4 817.1,310.4 793.6,322.4 771.4,337.2 746.3,351.6 728.8,361.7 713.1,370.4" fill="none" stroke="#c3c585" stroke-width="4.00" stroke-linejoin="round" stroke-linecap="round" />
<polyline points="747.0,434.7 746.3,433.9 711.8,444.5 672.6,452.6 633.5,459.9 595.6,466.6 581.2,468.9 579.8,469.6 525.4,481.9 501.5,490.6" fill="none" stroke="#c3c585" stroke-width="4.00" stroke-linejoin="round" stroke-linecap="round" />
<polyline points="465.0,471.0 471.0,474.3 484.0,481.9 497.1,491.7 503.0,500.0 508.0,510.0 519.2,536.9 523.0,560.0 524.8,583.9 531.5,604.1 535.0,624.0 538.2,644.4 541.6,662.4 542.7,687.0" fill="none" stroke="#c3c585" stroke-width="4.00" stroke-linejoin="round" stroke-linecap="round" />
<polyline points="542.7,687.0 571.8,683.6 596.5,675.8 620.0,674.9 637.0,675.6 645.5,680.5 668.1,676.3 687.9,679.1 699.2,683.4 707.7,694.7 719.0,703.2 741.7,711.7 761.5,713.1 775.6,711.0 789.8,713.1 800.0,718.0" fill="none" stroke="#c3c585" stroke-width="4.00" stroke-linejoin="round" stroke-linecap="round" />
<polyline points="542.7,687.0 545.0,700.5 560.6,712.8 566.0,720.0" fill="none" stroke="#c3c585" stroke-width="4.00" stroke-linejoin="round" stroke-linecap="round" />
<polyline points="986.7,505.0 985.5,540.0 984.5,563.8 980.0,620.0 973.3,684.8 971.0,720.0" fill="none" stroke="#c3c585" stroke-width="4.00" stroke-linejoin="round" stroke-linecap="round" />
<polyline points="984.5,563.8 962.0,568.3 933.0,577.2 903.8,592.9 877.0,601.9" fill="none" stroke="#c3c585" stroke-width="4.00" stroke-linejoin="round" stroke-linecap="round" />
<polyline points="984.5,563.8 1010.0,560.0" fill="none" stroke="#c3c585" stroke-width="4.00" stroke-linejoin="round" stroke-linecap="round" />
<polyline points="1015.0,181.0 1008.0,185.0 977.3,205.7 946.9,228.6 912.0,251.4 895.7,254.0 881.1,262.3 869.3,273.0 843.3,294.4 817.1,310.4 793.6,322.4 771.4,337.2 746.3,351.6 728.8,361.7 713.1,370.4" fill="none" stroke="#f6f9bd" stroke-width="2.80" stroke-linejoin="round" stroke-linecap="round" />
<polyline points="747.0,434.7 746.3,433.9 711.8,444.5 672.6,452.6 633.5,459.9 595.6,466.6 581.2,468.9 579.8,469.6 525.4,481.9 501.5,490.6" fill="none" stroke="#f6f9bd" stroke-width="2.80" stroke-linejoin="round" stroke-linecap="round" />
<polyline points="465.0,471.0 471.0,474.3 484.0,481.9 497.1,491.7 503.0,500.0 508.0,510.0 519.2,536.9 523.0,560.0 524.8,583.9 531.5,604.1 535.0,624.0 538.2,644.4 541.6,662.4 542.7,687.0" fill="none" stroke="#f6f9bd" stroke-width="2.80" stroke-linejoin="round" stroke-linecap="round" />
<polyline points="542.7,687.0 571.8,683.6 596.5,675.8 620.0,674.9 637.0,675.6 645.5,680.5 668.1,676.3 687.9,679.1 699.2,683.4 707.7,694.7 719.0,703.2 741.7,711.7 761.5,713.1 775.6,711.0 789.8,713.1 800.0,718.0" fill="none" stroke="#f6f9bd" stroke-width="2.80" stroke-linejoin="round" stroke-linecap="round" />
<polyline points="542.7,687.0 545.0,700.5 560.6,712.8 566.0,720.0" fill="none" stroke="#f6f9bd" stroke-width="2.80" stroke-linejoin="round" stroke-linecap="round" />
<polyline points="986.7,505.0 985.5,540.0 984.5,563.8 980.0,620.0 973.3,684.8 971.0,720.0" fill="none" stroke="#f6f9bd" stroke-width="2.80" stroke-linejoin="round" stroke-linecap="round" />
<polyline points="984.5,563.8 962.0,568.3 933.0,577.2 903.8,592.9 877.0,601.9" fill="none" stroke="#f6f9bd" stroke-width="2.80" stroke-linejoin="round" stroke-linecap="round" />
<polyline points="984.5,563.8 1010.0,560.0" fill="none" stroke="#f6f9bd" stroke-width="2.80" stroke-linejoin="round" stroke-linecap="round" />
<polyline points="527.0,93.0 537.4,110.0 575.0,171.0 609.3,230.9 644.0,282.3 680.5,327.8 696.2,351.2 711.8,371.4 739.2,411.1 747.0,423.2 755.7,432.5 781.8,468.5 817.9,519.7 827.6,536.7 863.7,582.2 870.7,594.2 900.0,640.0 943.5,699.4 960.0,722.0" fill="none" stroke="#e6ab5e" stroke-width="5.00" stroke-linejoin="round" stroke-linecap="round" stroke-linecap="butt"/>
<polyline points="465.0,236.0 471.0,228.6 514.5,170.9 550.4,130.7 560.2,116.5 570.0,100.0" fill="none" stroke="#e6ab5e" stroke-width="5.00" stroke-linejoin="round" stroke-linecap="round" stroke-linecap="butt"/>
<polyline points="527.0,93.0 537.4,110.0 575.0,171.0 609.3,230.9 644.0,282.3 680.5,327.8 696.2,351.2 711.8,371.4 739.2,411.1 747.0,423.2 755.7,432.5 781.8,468.5 817.9,519.7 827.6,536.7 863.7,582.2 870.7,594.2 900.0,640.0 943.5,699.4 960.0,722.0" fill="none" stroke="#fbd094" stroke-width="3.60" stroke-linejoin="round" stroke-linecap="round" stroke-linecap="butt"/>
<polyline points="465.0,236.0 471.0,228.6 514.5,170.9 550.4,130.7 560.2,116.5 570.0,100.0" fill="none" stroke="#fbd094" stroke-width="3.60" stroke-linejoin="round" stroke-linecap="round" stroke-linecap="butt"/>
<polyline points="465.0,486.0 471.0,484.0 500.0,470.0 540.0,440.0 588.5,410.0 581.2,414.4 630.8,399.1 677.9,383.0 711.8,371.7 746.3,357.7 764.9,347.8 791.0,338.5 817.1,327.8 843.3,310.4 862.9,290.4 882.4,273.0 891.6,264.3 905.0,250.0 940.0,225.0 975.0,200.0 1008.0,180.0" fill="none" stroke="#5b62e6" stroke-width="0.95" stroke-linejoin="round" stroke-linecap="round" stroke-dasharray="0.1 2.6"/>
<polyline points="870.7,345.6 875.9,365.7 882.4,389.7 890.2,417.8 898.1,449.9 905.0,480.0 912.0,510.0 925.0,560.0 940.0,610.0 955.0,660.0 965.0,715.0" fill="none" stroke="#5b62e6" stroke-width="0.95" stroke-linejoin="round" stroke-linecap="round" stroke-dasharray="0.1 2.6"/>
<text transform="translate(620.0,248.2) rotate(58.2)" x="0" y="2.5" font-size="7.2" text-anchor="middle" textLength="66.5" lengthAdjust="spacingAndGlyphs" fill="#4a4030" stroke="#fbd19f" stroke-width="0.6" paint-order="stroke" >Chaussée de Namur</text>
<text transform="translate(783.0,472.7) rotate(52.5)" x="0" y="2.5" font-size="7.2" text-anchor="middle" textLength="62.3" lengthAdjust="spacingAndGlyphs" fill="#4a4030" stroke="#fbd19f" stroke-width="0.6" paint-order="stroke" >Chaussée de Namur</text>
<text transform="translate(848.3,566.5) rotate(55.0)" x="0" y="2.5" font-size="7.2" text-anchor="middle" textLength="64.3" lengthAdjust="spacingAndGlyphs" fill="#4a4030" stroke="#fbd19f" stroke-width="0.6" paint-order="stroke" >Chaussée de Louvain</text>
<text transform="translate(534.5,106.0) rotate(55.7)" x="0" y="2.5" font-size="7.2" text-anchor="middle" textLength="26.6" lengthAdjust="spacingAndGlyphs" fill="#4a4030" stroke="#fbd19f" stroke-width="0.6" paint-order="stroke" >Chaussée de Namur</text>
<text transform="translate(842.6,294.7) rotate(-33.5)" x="0" y="2.4" font-size="6.8" text-anchor="middle" textLength="64.1" lengthAdjust="spacingAndGlyphs" fill="#4a4030" stroke="#f6f9bd" stroke-width="0.6" paint-order="stroke" >Avenue des Déportés</text>
<text transform="translate(690.2,448.9) rotate(-9.7)" x="0" y="2.4" font-size="6.8" text-anchor="middle" textLength="43.7" lengthAdjust="spacingAndGlyphs" fill="#4a4030" stroke="#f6f9bd" stroke-width="0.6" paint-order="stroke" >Rue de Perwez</text>
<text transform="translate(967.5,212.2) rotate(-39.5)" x="0" y="2.4" font-size="6.8" text-anchor="middle" textLength="48.0" lengthAdjust="spacingAndGlyphs" fill="#4a4030" stroke="#f6f9bd" stroke-width="0.6" paint-order="stroke" >Rue de la Mélée</text>
<text transform="translate(521.6,556.0) rotate(82.2)" x="0" y="2.3" font-size="6.5" text-anchor="middle" textLength="44.4" lengthAdjust="spacingAndGlyphs" fill="#4a4030" stroke="#f6f9bd" stroke-width="0.6" paint-order="stroke" >Rue Saint-Roch</text>
<text transform="translate(536.0,633.8) rotate(79.9)" x="0" y="2.3" font-size="6.5" text-anchor="middle" textLength="51.2" lengthAdjust="spacingAndGlyphs" fill="#4a4030" stroke="#f6f9bd" stroke-width="0.6" paint-order="stroke" >Route de Perwez</text>
<text transform="translate(688.1,546.7) rotate(-25.9)" x="0" y="3.1" font-size="9.0" text-anchor="middle" textLength="58.6" lengthAdjust="spacingAndGlyphs" fill="#b394bb" stroke="#eef0d5" stroke-width="1.0" paint-order="stroke" >Brabant wallon</text>
<text transform="translate(763.8,525.2) rotate(-8.3)" x="0" y="3.0" font-size="8.6" text-anchor="middle" textLength="29.4" lengthAdjust="spacingAndGlyphs" fill="#b394bb" stroke="#eef0d5" stroke-width="1.0" paint-order="stroke" >Nivelles</text>
<text transform="translate(752.0,543.8) rotate(-1.7)" x="0" y="3.0" font-size="8.6" text-anchor="middle" textLength="26.4" lengthAdjust="spacingAndGlyphs" fill="#b394bb" stroke="#eef0d5" stroke-width="1.0" paint-order="stroke" >Namur</text>
<text transform="translate(1003.0,487.0) rotate(-2.2)" x="0" y="3.0" font-size="8.6" text-anchor="middle" textLength="26.0" lengthAdjust="spacingAndGlyphs" fill="#b394bb" stroke="#eef0d5" stroke-width="1.0" paint-order="stroke" >Namur</text>
<text x="517.0" y="229.5" font-size="9.3" text-anchor="middle" fill="#555" stroke="#f4f4ec" stroke-width="1.3" paint-order="stroke" stroke-opacity="0.85">Thorembais-</text>
<text x="517.0" y="241.0" font-size="9.3" text-anchor="middle" fill="#555" stroke="#f4f4ec" stroke-width="1.3" paint-order="stroke" stroke-opacity="0.85">les-Béguines</text>
<text x="780.5" y="160.0" font-size="9.3" text-anchor="middle" fill="#555" stroke="#f4f4ec" stroke-width="1.3" paint-order="stroke" stroke-opacity="0.85">Bomal</text>
<text x="980.0" y="399.5" font-size="9.3" text-anchor="middle" fill="#555" stroke="#f4f4ec" stroke-width="1.3" paint-order="stroke" stroke-opacity="0.85">Ramillies</text>
<text x="496.0" y="499.5" font-size="9.3" text-anchor="middle" fill="#555" stroke="#f4f4ec" stroke-width="1.3" paint-order="stroke" stroke-opacity="0.85">Perwez</text>
<text x="599.0" y="682.0" font-size="9.3" text-anchor="middle" fill="#555" stroke="#f4f4ec" stroke-width="1.3" paint-order="stroke" stroke-opacity="0.85">Aische-En-Refail</text>
<text x="865.0" y="609.0" font-size="9.3" text-anchor="middle" fill="#555" stroke="#f4f4ec" stroke-width="1.3" paint-order="stroke" stroke-opacity="0.85">Noville-sur-</text>
<text x="866.0" y="621.0" font-size="9.3" text-anchor="middle" fill="#555" stroke="#f4f4ec" stroke-width="1.3" paint-order="stroke" stroke-opacity="0.85">Mehaigne</text>
<text x="734.7" y="257.6" font-size="9.26" text-anchor="middle" fill="#555" stroke="#f4f4ec" stroke-width="1.3" paint-order="stroke" stroke-opacity="0.85">Mont-Saint-</text>
<text x="735.0" y="269.1" font-size="9.26" text-anchor="middle" fill="#555" stroke="#f4f4ec" stroke-width="1.3" paint-order="stroke" stroke-opacity="0.85">André</text>
<text x="722.7" y="348.5" font-size="9.26" text-anchor="middle" fill="#555" stroke="#f4f4ec" stroke-width="1.3" paint-order="stroke" stroke-opacity="0.85">Petit-Rosière</text>
<text x="817.8" y="323.1" font-size="9.56" text-anchor="middle" fill="#555" stroke="#f4f4ec" stroke-width="1.3" paint-order="stroke" stroke-opacity="0.85">Geest-Gérompont</text>
<text x="753.4" y="432.3" font-size="9.41" text-anchor="middle" fill="#555" stroke="#f4f4ec" stroke-width="1.3" paint-order="stroke" stroke-opacity="0.85">Grand-Rosière-</text>
<text x="753.4" y="443.6" font-size="9.41" text-anchor="middle" fill="#555" stroke="#f4f4ec" stroke-width="1.3" paint-order="stroke" stroke-opacity="0.85">Hottomont</text>
<rect x="550.1" y="106.7" width="22.4" height="12.6" rx="2" fill="#fce1c6" stroke="#d9a071" stroke-width="0.8"/><text x="561.3" y="116.0" font-size="8.4" text-anchor="middle" fill="#4d4433" stroke="#4d4433" stroke-width="0.25">N29</text>
<rect x="556.0" y="153.3" width="22.4" height="12.6" rx="2" fill="#fce1c6" stroke="#d9a071" stroke-width="0.8"/><text x="567.2" y="162.6" font-size="8.4" text-anchor="middle" fill="#4d4433" stroke="#4d4433" stroke-width="0.25">N91</text>
<rect x="811.8" y="523.3" width="22.4" height="12.6" rx="2" fill="#fce1c6" stroke="#d9a071" stroke-width="0.8"/><text x="823.0" y="532.6" font-size="8.4" text-anchor="middle" fill="#4d4433" stroke="#4d4433" stroke-width="0.25">N91</text>
<rect x="880.3" y="247.7" width="27.1" height="12.6" rx="2" fill="#f6f9cf" stroke="#b9bb7d" stroke-width="0.8"/><text x="893.8" y="257.0" font-size="8.4" text-anchor="middle" fill="#4d4433" stroke="#4d4433" stroke-width="0.25">N279</text>
<rect x="565.1" y="463.7" width="27.1" height="12.6" rx="2" fill="#f6f9cf" stroke="#b9bb7d" stroke-width="0.8"/><text x="578.6" y="473.1" font-size="8.4" text-anchor="middle" fill="#4d4433" stroke="#4d4433" stroke-width="0.25">N243</text>
<rect x="984.5" y="550.7" width="27.1" height="12.6" rx="2" fill="#f6f9cf" stroke="#b9bb7d" stroke-width="0.8"/><text x="998.0" y="560.0" font-size="8.4" text-anchor="middle" fill="#4d4433" stroke="#4d4433" stroke-width="0.25">N624</text>
<rect x="959.8" y="685.2" width="27.1" height="12.6" rx="2" fill="#f6f9cf" stroke="#b9bb7d" stroke-width="0.8"/><text x="973.3" y="694.5" font-size="8.4" text-anchor="middle" fill="#4d4433" stroke="#4d4433" stroke-width="0.25">N991</text>
</g></defs></svg>
<div class="abs" style="left:949.5px;top:-13.6px;width:18px;height:18px;border-radius:50%;background:#212529"></div>
<div id="page"><div class="abs" style="left:13.00px;top:76.00px;width:1120.00px;height:1.00px;background:#dee2e6;"></div>
<svg class="abs" style="left:73px;top:37px" width="80" height="33" viewBox="0 0 80 33">
<path d="M2 14 C6 6 24 1 42 0.5 C62 0 79 8 79 19 C79 28 68 33 52 32.5 C34 32 14 27 4 20 C0 17.5 0.5 15.5 2 14Z" fill="#8f8f8f"/>
<text x="6" y="21.2" font-family="Liberation Sans" font-weight="bold" font-size="14.6" fill="#fff" letter-spacing="-1.1">Your</text>
<text x="38.5" y="21.2" font-family="Liberation Sans" font-size="15.5" fill="#fff" letter-spacing="-0.7">Logo</text></svg>
<div class="t" style="left:178.60px;top:47.00px;font-size:13.00px;letter-spacing:-0.559px;color:#2b2f33;">Home</div>
<div class="t" style="left:226.90px;top:47.00px;font-size:13.00px;letter-spacing:-0.120px;color:#2b2f33;">Shop</div>
<div class="t" style="left:270.10px;top:47.00px;font-size:13.00px;letter-spacing:0.206px;color:#2b2f33;">Contact us</div>
<svg class="abs" style="left:699px;top:48px" width="16" height="14" viewBox="0 0 16 14"><path d="M0 1h2.6l.5 2H15l-1.6 6H4.6L2 2.2H0z" fill="#212529"/><circle cx="5.5" cy="12" r="1.4" fill="#212529"/><circle cx="12" cy="12" r="1.4" fill="#212529"/></svg>
<div class="abs" style="left:706.40px;top:32.70px;width:18.40px;height:18.40px;background:#714B67;border-radius:50%;"></div>
<div class="t" style="left:712.96px;top:37.26px;font-size:9.50px;color:#fff;font-weight:bold;">1</div>
<div class="abs" style="left:729.00px;top:37.00px;width:32.00px;height:32.00px;background:#f3f3f3;border-radius:50%;"></div>
<svg class="abs" style="left:738px;top:47px" width="15" height="15" viewBox="0 0 15 15"><circle cx="6.3" cy="6.3" r="4.8" fill="none" stroke="#212529" stroke-width="1.6"/><path d="M9.8 9.8L14 14" stroke="#212529" stroke-width="1.8"/></svg>
<svg class="abs" style="left:777px;top:47px" width="12" height="13" viewBox="0 0 12 13"><path d="M2.5 0.5 L5 0.5 L6 4 L4.3 5 Q5.5 8 8 9.3 L9.2 7.6 L12 9 L11.6 12 Q6 12.5 2.6 8 Q0.5 4.5 2.5 .5Z" fill="#212529"/></svg>
<div class="t" style="left:802.00px;top:47.30px;font-size:13.00px;letter-spacing:-0.900px;color:#2b2f33;">+1 (650) 555-0111</div>
<div class="t" style="left:927.60px;top:47.30px;font-size:13.00px;letter-spacing:-0.139px;color:#714B67;">Mitchell Admin</div>
<div class="abs" style="left:1016.5px;top:51.5px;border-left:3.5px solid transparent;border-right:3.5px solid transparent;border-top:4px solid #714B67"></div>
<div class="abs" style="left:1042.70px;top:38.00px;width:97.30px;height:30.60px;background:#714B67;border-radius:5px;"></div>
<div class="t" style="left:1057.00px;top:46.47px;font-size:13.50px;letter-spacing:-0.231px;color:#fff;">Contact Us</div>
<div class="t" style="left:74.00px;top:106.27px;font-size:13.50px;letter-spacing:-0.111px;color:#714B67;">Review Order</div>
<svg class="abs" style="left:166px;top:107px" width="10" height="13" viewBox="0 0 10 13"><path d="M2.5 2 L7.5 6.5 L2.5 11" fill="none" stroke="#495057" stroke-width="1.3"/></svg>
<div class="t" style="left:187.70px;top:106.27px;font-size:13.50px;color:#714B67;">Shipping</div>
<div class="t" style="left:74.40px;top:144.82px;font-size:26.20px;letter-spacing:1.042px;color:#111;">Confirm order</div>
<div class="abs" style="left:73.00px;top:194.40px;width:667.00px;height:84.60px;background:#fff;border:1px solid #d8dce0;border-radius:5px;"></div>
<div class="t" style="left:87.70px;top:212.73px;font-size:12.60px;letter-spacing:0.116px;color:#212529;font-weight:bold;">Billing:</div>
<div class="t" style="left:134.50px;top:215.10px;font-size:9.80px;color:#343a40;">215 Vine St, Scranton PA 18503</div>
<div class="t" style="left:87.70px;top:241.33px;font-size:12.60px;letter-spacing:-0.048px;color:#212529;font-weight:bold;">Shipping:</div>
<div class="t" style="left:148.80px;top:243.70px;font-size:9.80px;color:#343a40;">Rue de ramillies 1</div>
<div class="t" style="left:74.40px;top:300.77px;font-size:20.00px;color:#111;">Choose a delivery method</div>
<div class="abs" style="left:73.00px;top:329.40px;width:667.00px;height:87.80px;background:#fff;border:1px solid #d8dce0;border-radius:5px;"></div>
<div class="abs" style="left:74.00px;top:363.00px;width:666.00px;height:1.00px;background:#d8dce0;"></div>
<div class="abs" style="left:87.40px;top:340.00px;width:11.00px;height:11.00px;background:#fff;border:1px solid #8a9097;border-radius:50%;"></div>
<div class="t" style="left:102.20px;top:339.49px;font-size:13.60px;letter-spacing:-0.112px;color:#2b2f33;">Standard delivery</div>
<div class="abs" style="left:87.20px;top:373.30px;width:11.60px;height:11.60px;background:#0d6efd;border-radius:50%;box-shadow:0 0 0 1px #9ec5fe;"></div>
<div class="abs" style="left:91.00px;top:377.10px;width:4.00px;height:4.00px;background:#fff;border-radius:50%;"></div>
<div class="t" style="left:102.20px;top:372.45px;font-size:14.00px;letter-spacing:-0.646px;color:#2b2f33;">Sendcloud</div>
<div class="t" style="left:174.70px;top:374.31px;font-size:11.80px;color:#dc3545;font-weight:bold;font-style:italic;letter-spacing:-0.3px;">Select a pick-up point</div>
<div class="abs" style="left:87.70px;top:392.00px;width:87.90px;height:17.80px;background:#714B67;border-radius:3px;"></div>
<div class="t" style="left:95.50px;top:395.70px;font-size:9.80px;letter-spacing:0.037px;color:#fff;">Select a location</div>
<div class="t" style="left:74.40px;top:437.78px;font-size:12.90px;letter-spacing:-0.350px;color:#111;font-weight:bold;">CHOOSE A PAYMENT METHOD</div>
<div class="abs" style="left:73.00px;top:460.20px;width:667.00px;height:136.40px;background:#fff;border:1px solid #d8dce0;border-radius:5px;"></div>
<div class="abs" style="left:87.70px;top:479.90px;width:13.00px;height:13.00px;background:#fff;border:4px solid #714B67;border-radius:50%;"></div>
<div class="t" style="left:107.70px;top:479.19px;font-size:13.60px;letter-spacing:-0.426px;color:#2b2f33;">Demo</div>
<svg class="abs" style="left:149.5px;top:479.5px" width="14" height="13" viewBox="0 0 14 13"><path d="M7 .6 L13.6 12.4 H.4Z" fill="#ffc107"/><rect x="6.3" y="4.6" width="1.4" height="4.2" fill="#fff"/><rect x="6.3" y="9.6" width="1.4" height="1.4" fill="#fff"/></svg>
<div class="t" style="left:87.70px;top:509.84px;font-size:12.00px;color:#2b2f33;text-shadow:0.3px 0 0 #2b2f33;">Payment Details (test data)</div>
<div class="abs" style="left:87.70px;top:525.50px;width:612.30px;height:31.20px;background:#fff;border:1px solid #ced4da;border-radius:5px;"></div>
<div class="t" style="left:98.50px;top:534.53px;font-size:12.60px;color:#6c757d;">XXXX XXXX XXXX XXXX</div>
<div class="abs" style="left:87.70px;top:566.60px;width:12.90px;height:12.90px;background:#fff;border:1px solid #ced4da;border-radius:2px;"></div>
<div class="t" style="left:107.70px;top:567.87px;font-size:11.50px;color:#495057;">Save my payment details</div>
<div class="abs" style="left:1000.00px;top:148.00px;width:133.00px;height:1.00px;background:#dee2e6;"></div>
<svg class="abs" style="left:1099.5px;top:196.5px" width="15" height="9" viewBox="0 0 15 9"><path d="M1 1.2 L7.5 7.6 L14 1.2" fill="none" stroke="#212529" stroke-width="1.4"/></svg>
<div class="abs" style="left:1000.00px;top:254.30px;width:115.00px;height:1.00px;background:#dee2e6;"></div>
<div class="t" style="left:1080.10px;top:271.50px;font-size:13.00px;letter-spacing:-0.329px;color:#6c757d;">$ 5.91</div>
<div class="t" style="left:1065.30px;top:297.80px;font-size:13.00px;letter-spacing:-0.158px;color:#2b2f33;">$ 755.91</div>
<div class="t" style="left:1065.30px;top:324.50px;font-size:13.00px;letter-spacing:-0.158px;color:#2b2f33;">$ 158.74</div>
<div class="abs" style="left:1000.00px;top:354.00px;width:115.00px;height:1.00px;background:#dee2e6;"></div>
<div class="t" style="left:1064.60px;top:371.30px;font-size:13.00px;letter-spacing:-0.058px;color:#111;font-weight:bold;">$ 914.65</div>
<div class="abs" style="left:900.00px;top:404.00px;width:160.00px;height:31.00px;background:#fff;border:1px solid #ced4da;border-right:0;"></div>
<div class="abs" style="left:1059.40px;top:404.00px;width:55.60px;height:31.00px;background:#8595A2;border-radius:0 5px 5px 0;"></div>
<div class="t" style="left:1067.75px;top:413.00px;font-size:13.00px;color:#fff;">Apply</div>
<div class="abs" style="left:900.00px;top:462.00px;width:215.00px;height:30.80px;background:#a68c9f;border-radius:5px;"></div>
<div class="abs" style="left:1000.00px;top:513.00px;width:115.00px;height:1.00px;background:#e9ecef;"></div>
<div class="abs" style="left:1007.50px;top:540.50px;width:1.50px;height:1.50px;background:#212529;"></div>
<div class="abs" style="left:1007.50px;top:545.00px;width:1.50px;height:1.50px;background:#212529;"></div>
<div class="abs" style="left:1000.00px;top:573.00px;width:133.00px;height:1.00px;background:#ced4da;"></div></div>
<div id="dim"></div>
<div id="modal"><div class="t" style="left:14.10px;top:16.77px;font-size:20.00px;letter-spacing:0.116px;color:#212529;text-shadow:0.25px 0 0 #212529;">Choose a pick-up point</div>
<svg class="abs" style="left:778.3px;top:20.2px" width="15" height="15" viewBox="0 0 15 15"><path d="M1 1 L14 14 M14 1 L1 14" stroke="#6b6b6b" stroke-width="1.35"/></svg>
<div class="abs" style="left:0.00px;top:55.00px;width:805.00px;height:1.00px;background:#dee2e6;"></div>
<div class="abs" style="left:268.00px;top:56.00px;width:1.00px;height:784.00px;background:#dee2e6;"></div>
<div class="abs" style="left:13.60px;top:69.30px;width:241.80px;height:31.00px;background:#f0f0f0;border-radius:6px;"></div>
<div class="t" style="left:24.30px;top:78.20px;font-size:13.00px;letter-spacing:-0.140px;color:#333;">1367</div>
<svg class="abs" style="left:227.5px;top:77.7px" width="14.2" height="14.2" viewBox="0 0 16 16"><circle cx="6.6" cy="6.6" r="5" fill="none" stroke="#333" stroke-width="1.90"/><path d="M10.4 10.4L15 15" stroke="#333" stroke-width="2.20" stroke-linecap="round"/></svg>
<div class="abs" style="left:0.00px;top:114.00px;width:268.00px;height:51.20px;background:#f0f0f0;"></div>
<div class="abs" style="left:0.00px;top:114.00px;width:3.60px;height:51.20px;background:#7a4869;"></div>
<div class="abs" style="left:0.00px;top:164.60px;width:268.00px;height:1.20px;background:#dedede;"></div>
<div class="t" style="left:19.38px;top:124.30px;font-size:13.00px;color:#2b2f33;font-weight:bold;">1</div>
<div class="t" style="left:46.30px;top:123.91px;font-size:13.10px;color:#2b2f33;font-weight:bold;">Station Avia</div>
<div class="t" style="left:46.30px;top:143.75px;font-size:11.40px;color:#6b6b6b;">Chaussée De Namur 67</div>
<div class="abs" style="left:0.00px;top:215.80px;width:268.00px;height:1.20px;background:#dedede;"></div>
<div class="t" style="left:19.38px;top:175.50px;font-size:13.00px;color:#2b2f33;font-weight:bold;">2</div>
<div class="t" style="left:46.30px;top:175.11px;font-size:13.10px;color:#2b2f33;font-weight:bold;">Autre-Eglise</div>
<div class="t" style="left:46.30px;top:194.95px;font-size:11.40px;color:#6b6b6b;">Rue De La Place 3</div>
<div class="abs" style="left:0.00px;top:267.00px;width:268.00px;height:1.20px;background:#dedede;"></div>
<div class="t" style="left:19.38px;top:226.70px;font-size:13.00px;color:#2b2f33;font-weight:bold;">3</div>
<div class="t" style="left:46.30px;top:226.31px;font-size:13.10px;color:#2b2f33;font-weight:bold;">Perwez</div>
<div class="t" style="left:46.30px;top:246.15px;font-size:11.40px;color:#6b6b6b;">Avenue Wilmart 26</div>
<div class="abs" style="left:0.00px;top:318.20px;width:268.00px;height:1.20px;background:#dedede;"></div>
<div class="t" style="left:19.38px;top:277.90px;font-size:13.00px;color:#2b2f33;font-weight:bold;">4</div>
<div class="t" style="left:46.30px;top:277.51px;font-size:13.10px;color:#2b2f33;font-weight:bold;">Eghezee</div>
<div class="t" style="left:46.30px;top:297.35px;font-size:11.40px;color:#6b6b6b;">Chaussée De Louvain 37</div>
<div class="abs" style="left:0.00px;top:389.10px;width:268.00px;height:1.20px;background:#dedede;"></div>
<div class="t" style="left:19.38px;top:329.10px;font-size:13.00px;color:#2b2f33;font-weight:bold;">5</div>
<div class="t" style="left:46.30px;top:329.01px;font-size:13.10px;color:#2b2f33;font-weight:bold;">Librairie Du Rond Point</div>
<div class="t" style="left:46.30px;top:348.91px;font-size:13.10px;color:#2b2f33;font-weight:bold;">Thorembais</div>
<div class="t" style="left:46.30px;top:368.25px;font-size:11.40px;color:#6b6b6b;">Chaussée De Charleroi 31B</div>
<div class="abs" style="left:0.00px;top:440.30px;width:268.00px;height:1.20px;background:#dedede;"></div>
<div class="t" style="left:19.38px;top:400.00px;font-size:13.00px;color:#2b2f33;font-weight:bold;">6</div>
<div class="t" style="left:46.30px;top:399.61px;font-size:13.10px;color:#2b2f33;font-weight:bold;">Total Eghezee</div>
<div class="t" style="left:46.30px;top:419.45px;font-size:11.40px;color:#6b6b6b;">Route De Ramillies 6</div>
<div class="abs" style="left:0.00px;top:491.50px;width:268.00px;height:1.20px;background:#dedede;"></div>
<div class="t" style="left:19.38px;top:451.20px;font-size:13.00px;color:#2b2f33;font-weight:bold;">7</div>
<div class="t" style="left:46.30px;top:450.81px;font-size:13.10px;color:#2b2f33;font-weight:bold;">Librairie L&#x27;As-Tu Lu Jauche</div>
<div class="t" style="left:46.30px;top:470.65px;font-size:11.40px;color:#6b6b6b;">Avenue Albert Drossart 3</div>
<div class="abs" style="left:0.00px;top:542.70px;width:268.00px;height:1.20px;background:#dedede;"></div>
<div class="t" style="left:19.38px;top:502.40px;font-size:13.00px;color:#2b2f33;font-weight:bold;">8</div>
<div class="t" style="left:46.30px;top:502.01px;font-size:13.10px;color:#2b2f33;font-weight:bold;">Orp-Jauche</div>
<div class="t" style="left:46.30px;top:521.85px;font-size:11.40px;color:#6b6b6b;">Place De La Roulette 3</div>
<div class="abs" style="left:0.00px;top:593.90px;width:268.00px;height:1.20px;background:#dedede;"></div>
<div class="t" style="left:19.38px;top:553.60px;font-size:13.00px;color:#2b2f33;font-weight:bold;">9</div>
<div class="t" style="left:46.30px;top:553.21px;font-size:13.10px;color:#2b2f33;font-weight:bold;">Automaat Trafic Jodoigne</div>
<div class="t" style="left:46.30px;top:573.05px;font-size:11.40px;color:#6b6b6b;">Rue De Septembre 5</div>
<div class="abs" style="left:0.00px;top:645.10px;width:268.00px;height:1.20px;background:#dedede;"></div>
<div class="t" style="left:15.77px;top:604.80px;font-size:13.00px;color:#2b2f33;font-weight:bold;">10</div>
<div class="t" style="left:46.30px;top:604.41px;font-size:13.10px;color:#2b2f33;font-weight:bold;">Jodoigne</div>
<div class="t" style="left:46.30px;top:624.25px;font-size:11.40px;color:#6b6b6b;">Avenue Des Commandants Borlée 42</div>
<div class="abs" style="left:0.00px;top:696.30px;width:268.00px;height:1.20px;background:#dedede;"></div>
<div class="t" style="left:16.13px;top:656.00px;font-size:13.00px;color:#2b2f33;font-weight:bold;">11</div>
<div class="t" style="left:46.30px;top:655.61px;font-size:13.10px;color:#2b2f33;font-weight:bold;">Librairie De La Bruyere</div>
<div class="t" style="left:46.30px;top:675.45px;font-size:11.40px;color:#6b6b6b;">Rue Saint-Jean 1</div>
<div class="t" style="left:15.77px;top:707.20px;font-size:13.00px;color:#2b2f33;font-weight:bold;">12</div>
<div class="t" style="left:46.30px;top:706.81px;font-size:13.10px;color:#2b2f33;font-weight:bold;">Wasseiges</div>
<div class="t" style="left:46.30px;top:726.65px;font-size:11.40px;color:#6b6b6b;">Rue De Merdorp 18</div>
<div class="abs" style="left:269px;top:56px;width:537px;height:605px;overflow:hidden;background:#eef0d5"><svg class="abs" style="left:0;top:0;filter:blur(0.9px)" width="537" height="605" viewBox="471 110 537 605"><use href="#osm"/></svg><svg class="abs" style="left:0;top:0;opacity:0.45" width="537" height="605" viewBox="471 110 537 605"><use href="#osm"/></svg><svg class="abs" style="left:0;top:0;filter:blur(0.35px)" width="537" height="605" viewBox="471 110 537 605"><ellipse cx="517" cy="512.3" rx="5.5" ry="1.3" fill="#777" opacity="0.55"/><path d="M507.60 500.96 A11.30 11.30 0 1 1 525.40 500.96 Q521.59 507.58 516.50 512.20 Q511.42 507.58 507.60 500.96 Z" fill="#fff" stroke="#9a9a9a" stroke-width="0.8"/><text x="516.5" y="497.8" font-size="10.5" text-anchor="middle" fill="#444" font-family="Liberation Sans, sans-serif">3</text><path d="M738.12 427.32 A11.40 11.40 0 1 1 756.08 427.32 Q752.23 433.56 747.10 437.80 Q741.97 433.56 738.12 427.32 Z" fill="#7a4869" stroke="#6d3f5d" stroke-width="0.8"/><text x="747.1" y="423.7" font-size="9.5" text-anchor="middle" fill="#fff" font-family="Liberation Sans, sans-serif">1</text></svg><div class="abs" style="left:9.3px;top:8.8px;width:26.6px;height:51.4px;background:#fff;border:1.6px solid rgba(0,0,0,.2);border-radius:4px;background-clip:padding-box"></div><div class="abs" style="left:11.3px;top:34.0px;width:22.6px;height:1px;background:#ccc"></div><div class="abs" style="left:17.9px;top:20.9px;width:9.5px;height:1.9px;background:#111"></div><div class="abs" style="left:21.7px;top:17.1px;width:1.9px;height:9.5px;background:#111"></div><div class="abs" style="left:17.9px;top:45.4px;width:9.5px;height:1.9px;background:#111"></div><div class="abs" style="left:398.5px;top:590.5px;width:138.0px;height:14.2px;background:rgba(255,255,255,.82)"></div><div class="abs" style="left:402.6px;top:593.9px;width:9.6px;height:3.2px;background:#4c7be1"></div><div class="abs" style="left:402.6px;top:597.1px;width:9.6px;height:3.2px;background:#ffd500"></div><div class="t" style="left:415.30px;top:592.64px;font-size:9.40px;letter-spacing:0.079px;color:#0078a8;">Leaflet</div><div class="t" style="left:447.20px;top:592.64px;font-size:9.40px;color:#333;">|</div><div class="t" style="left:452.80px;top:592.64px;font-size:9.40px;color:#333;">©</div><div class="t" style="left:462.60px;top:592.64px;font-size:9.40px;letter-spacing:0.295px;color:#0078a8;">OpenStreetMap</div></div>
<div class="t" style="left:288.41px;top:685.23px;font-size:16.50px;color:#2b2f33;font-weight:bold;">1</div>
<div class="t" style="left:312.20px;top:684.93px;font-size:16.50px;letter-spacing:0.007px;color:#2b2f33;font-weight:bold;">Station Avia</div>
<div class="t" style="left:312.20px;top:708.44px;font-size:13.30px;letter-spacing:-0.309px;color:#3a3f44;">Chaussée De Namur 67</div>
<div class="t" style="left:312.20px;top:728.54px;font-size:13.30px;letter-spacing:-0.156px;color:#3a3f44;">1367 Ramillies</div>
<div class="abs" style="left:311.60px;top:758.20px;width:149.10px;height:31.20px;background:#7a4869;border-radius:5px;"></div>
<div class="t" style="left:325.75px;top:767.04px;font-size:13.30px;letter-spacing:0.049px;color:#fff;">Choose this location</div>
<div class="t" style="left:556.20px;top:683.00px;font-size:11.70px;color:#6b6b6b;">Monday</div>
<div class="t" style="left:639.40px;top:682.57px;font-size:12.20px;letter-spacing:-0.467px;color:#2b2f33;">07:00 - 18:30</div>
<div class="t" style="left:556.20px;top:703.62px;font-size:11.70px;color:#6b6b6b;">Tuesday</div>
<div class="t" style="left:639.40px;top:703.19px;font-size:12.20px;letter-spacing:-0.467px;color:#2b2f33;">07:00 - 18:30</div>
<div class="t" style="left:556.20px;top:724.24px;font-size:11.70px;color:#6b6b6b;">Wednesday</div>
<div class="t" style="left:639.40px;top:723.81px;font-size:12.20px;letter-spacing:-0.467px;color:#2b2f33;">07:00 - 18:30</div>
<div class="t" style="left:556.20px;top:744.86px;font-size:11.70px;color:#6b6b6b;">Thursday</div>
<div class="t" style="left:639.40px;top:744.43px;font-size:12.20px;letter-spacing:-0.467px;color:#2b2f33;">07:00 - 18:30</div>
<div class="t" style="left:556.20px;top:765.48px;font-size:11.70px;color:#6b6b6b;">Friday</div>
<div class="t" style="left:639.40px;top:765.05px;font-size:12.20px;letter-spacing:-0.467px;color:#2b2f33;">08:00 - 14:00</div>
<div class="t" style="left:719.80px;top:765.05px;font-size:12.20px;letter-spacing:-0.542px;color:#2b2f33;">15:00 - 18:00</div>
<div class="t" style="left:556.20px;top:786.10px;font-size:11.70px;color:#6b6b6b;">Saturday</div>
<div class="t" style="left:639.40px;top:785.67px;font-size:12.20px;letter-spacing:-0.467px;color:#2b2f33;">09:00 - 16:00</div>
<div class="t" style="left:556.20px;top:806.72px;font-size:11.70px;color:#6b6b6b;">Sunday</div>
<div class="t" style="left:639.40px;top:806.29px;font-size:12.20px;letter-spacing:-0.575px;color:#e6354b;">Closed</div></div>
<div class="abs" style="left:1235px;top:0;width:399px;height:690px;overflow:hidden">
<div class="abs" style="left:0.00px;top:-3.60px;width:399.00px;height:114.60px;background:#f0f0f0;"></div>
<div class="abs" style="left:0.00px;top:-3.60px;width:4.40px;height:114.60px;background:#7a4869;"></div>
<div class="abs" style="left:0.00px;top:110.80px;width:399.00px;height:1.30px;background:#d9d9d9;"></div>
<div class="t" style="left:24.67px;top:10.80px;font-size:16.30px;color:#212529;font-weight:bold;">1</div>
<div class="t" style="left:50.00px;top:10.03px;font-size:16.50px;color:#212529;font-weight:bold;">Station Avia</div>
<div class="t" style="left:50.00px;top:34.31px;font-size:14.40px;letter-spacing:-0.288px;color:#6b6b6b;">Chaussée De Namur 67</div>
<div class="t" style="left:50.00px;top:58.90px;font-size:14.30px;letter-spacing:-0.159px;color:#0bb04a;font-weight:bold;">Open now</div>
<svg class="abs" style="left:49.6px;top:86.5px" width="12.4" height="12.4" viewBox="0 0 14 14"><circle cx="7" cy="7" r="5.9" fill="none" stroke="#212529" stroke-width="1.5"/><path d="M7.2 3.6 V7.3 H4.6" fill="none" stroke="#212529" stroke-width="1.4"/></svg>
<div class="t" style="left:66.50px;top:85.10px;font-size:14.30px;letter-spacing:-0.199px;color:#212529;font-weight:bold;">Opening hours</div>
<div class="abs" style="left:0.00px;top:225.40px;width:399.00px;height:1.30px;background:#e2e2e2;"></div>
<div class="t" style="left:24.67px;top:125.40px;font-size:16.30px;color:#212529;font-weight:bold;">2</div>
<div class="t" style="left:50.00px;top:124.63px;font-size:16.50px;color:#212529;font-weight:bold;">Autre-Eglise</div>
<div class="t" style="left:50.00px;top:148.91px;font-size:14.40px;letter-spacing:-0.455px;color:#6b6b6b;">Rue De La Place 3</div>
<div class="t" style="left:50.00px;top:173.50px;font-size:14.30px;letter-spacing:-0.159px;color:#0bb04a;font-weight:bold;">Open now</div>
<svg class="abs" style="left:49.6px;top:201.1px" width="12.4" height="12.4" viewBox="0 0 14 14"><circle cx="7" cy="7" r="5.9" fill="none" stroke="#212529" stroke-width="1.5"/><path d="M7.2 3.6 V7.3 H4.6" fill="none" stroke="#212529" stroke-width="1.4"/></svg>
<div class="t" style="left:66.50px;top:199.70px;font-size:14.30px;letter-spacing:-0.199px;color:#212529;font-weight:bold;">Opening hours</div>
<div class="abs" style="left:0.00px;top:340.00px;width:399.00px;height:1.30px;background:#e2e2e2;"></div>
<div class="t" style="left:24.67px;top:240.00px;font-size:16.30px;color:#212529;font-weight:bold;">3</div>
<div class="t" style="left:50.00px;top:239.23px;font-size:16.50px;color:#212529;font-weight:bold;">Perwez</div>
<div class="t" style="left:50.00px;top:263.51px;font-size:14.40px;letter-spacing:0.082px;color:#6b6b6b;">Avenue Wilmart 26</div>
<div class="t" style="left:50.00px;top:288.10px;font-size:14.30px;letter-spacing:-0.159px;color:#0bb04a;font-weight:bold;">Open now</div>
<svg class="abs" style="left:49.6px;top:315.7px" width="12.4" height="12.4" viewBox="0 0 14 14"><circle cx="7" cy="7" r="5.9" fill="none" stroke="#212529" stroke-width="1.5"/><path d="M7.2 3.6 V7.3 H4.6" fill="none" stroke="#212529" stroke-width="1.4"/></svg>
<div class="t" style="left:66.50px;top:314.30px;font-size:14.30px;letter-spacing:-0.199px;color:#212529;font-weight:bold;">Opening hours</div>
<div class="abs" style="left:0.00px;top:454.60px;width:399.00px;height:1.30px;background:#e2e2e2;"></div>
<div class="t" style="left:24.67px;top:354.60px;font-size:16.30px;color:#212529;font-weight:bold;">4</div>
<div class="t" style="left:50.00px;top:353.83px;font-size:16.50px;color:#212529;font-weight:bold;">Eghezee</div>
<div class="t" style="left:50.00px;top:378.11px;font-size:14.40px;letter-spacing:-0.301px;color:#6b6b6b;">Chaussée De Louvain 37</div>
<div class="t" style="left:50.00px;top:402.70px;font-size:14.30px;letter-spacing:-0.159px;color:#0bb04a;font-weight:bold;">Open now</div>
<svg class="abs" style="left:49.6px;top:430.3px" width="12.4" height="12.4" viewBox="0 0 14 14"><circle cx="7" cy="7" r="5.9" fill="none" stroke="#212529" stroke-width="1.5"/><path d="M7.2 3.6 V7.3 H4.6" fill="none" stroke="#212529" stroke-width="1.4"/></svg>
<div class="t" style="left:66.50px;top:428.90px;font-size:14.30px;letter-spacing:-0.199px;color:#212529;font-weight:bold;">Opening hours</div>
<div class="abs" style="left:0.00px;top:569.20px;width:399.00px;height:1.30px;background:#e2e2e2;"></div>
<div class="t" style="left:24.67px;top:469.20px;font-size:16.30px;color:#212529;font-weight:bold;">5</div>
<div class="t" style="left:50.00px;top:468.43px;font-size:16.50px;letter-spacing:-0.223px;color:#212529;font-weight:bold;">Librairie Du Rond Point Thorembais</div>
<div class="t" style="left:50.00px;top:492.71px;font-size:14.40px;letter-spacing:-0.208px;color:#6b6b6b;">Chaussée De Charleroi 31B</div>
<div class="t" style="left:50.00px;top:517.30px;font-size:14.30px;letter-spacing:-0.159px;color:#0bb04a;font-weight:bold;">Open now</div>
<svg class="abs" style="left:49.6px;top:544.9px" width="12.4" height="12.4" viewBox="0 0 14 14"><circle cx="7" cy="7" r="5.9" fill="none" stroke="#212529" stroke-width="1.5"/><path d="M7.2 3.6 V7.3 H4.6" fill="none" stroke="#212529" stroke-width="1.4"/></svg>
<div class="t" style="left:66.50px;top:543.50px;font-size:14.30px;letter-spacing:-0.199px;color:#212529;font-weight:bold;">Opening hours</div>
<div class="abs" style="left:0.00px;top:683.80px;width:399.00px;height:1.30px;background:#e2e2e2;"></div>
<div class="abs" style="left:0.00px;top:609.00px;width:399.00px;height:1.20px;background:#e0e0e0;"></div>
<div class="abs" style="left:0.00px;top:610.20px;width:399.00px;height:79.80px;background:#fff;"></div>
<div class="t" style="left:24.67px;top:583.20px;font-size:16.30px;color:#212529;font-weight:bold;">6</div>
<div class="t" style="left:50.00px;top:582.73px;font-size:16.50px;color:#212529;font-weight:bold;">Total Eghezee</div>
<div class="abs" style="left:16.30px;top:626.50px;width:388.70px;height:38.50px;background:#7a4869;border-radius:6px;"></div>
<div class="t" style="left:124.70px;top:637.20px;font-size:16.30px;letter-spacing:0.116px;color:#fff;">Choose this location</div>
<svg class="abs" style="left:0.0px;top:673.5px" width="9" height="9" viewBox="0 0 9 9"><path d="M0 0 V9 H9 Q1 8.5 0 0Z" fill="#555b61"/></svg>
<div class="abs" style="left:394.70px;top:0.00px;width:4.10px;height:5.00px;background:#9a9a9a;"></div>
</div>
<div class="abs" style="left:1560px;top:5px;width:424px;height:890px;overflow:hidden;background:#fff">
<svg class="abs" style="left:0.0px;top:0.0px" width="8" height="8" viewBox="0 0 9 9"><path d="M0 9 V0 H9 Q1 .5 0 9Z" fill="#3b2233"/></svg>
<svg class="abs" style="left:416.0px;top:0.0px" width="8" height="8" viewBox="0 0 9 9"><path d="M9 9 V0 H0 Q8 .5 9 9Z" fill="#555b61"/></svg>
<svg class="abs" style="left:36.4px;top:17.9px" width="17" height="14" viewBox="0 0 17 14"><path d="M15.5 7 H2.2 M7 1.6 L1.6 7 L7 12.4" fill="none" stroke="#1f2a3a" stroke-width="2.1"/></svg>
<div class="t" style="left:72.70px;top:12.70px;font-size:22.80px;letter-spacing:0.595px;color:#1f2a3a;text-shadow:0.3px 0 0 #1f2a3a;">Choose a pick-up point</div>
<div class="abs" style="left:0.00px;top:49.00px;width:424.00px;height:1.20px;background:#e3e3e3;"></div>
<div class="abs" style="left:17.40px;top:66.40px;width:389.30px;height:39.80px;background:#f0f0f0;border-radius:8px;"></div>
<div class="t" style="left:32.20px;top:77.44px;font-size:17.20px;letter-spacing:-0.621px;color:#333;">1367</div>
<svg class="abs" style="left:370.0px;top:77.4px" width="18.2" height="18.2" viewBox="0 0 16 16"><circle cx="6.6" cy="6.6" r="5" fill="none" stroke="#2b2b2b" stroke-width="1.90"/><path d="M10.4 10.4L15 15" stroke="#2b2b2b" stroke-width="2.20" stroke-linecap="round"/></svg>
<div class="abs" style="left:0.00px;top:123.60px;width:424.00px;height:1.20px;background:#e3e3e3;"></div>
<div class="t" style="left:69.70px;top:144.96px;font-size:17.30px;letter-spacing:0.195px;color:#212529;">List view</div>
<div class="t" style="left:277.50px;top:144.96px;font-size:17.30px;letter-spacing:-0.016px;color:#111;font-weight:bold;">Map view</div>
<div class="abs" style="left:0.00px;top:182.60px;width:424.00px;height:1.00px;background:#d0d0d0;"></div>
<div class="abs" style="left:208.00px;top:182.70px;width:216.00px;height:1.80px;background:#86587a;"></div>
<div class="abs" style="left:0;top:184.7px;width:424px;height:474px;overflow:hidden;background:#eef0d5"><svg class="abs" style="left:0;top:0;filter:blur(0.85px)" width="424" height="474" viewBox="581.25 230.18 318.08 364.06" preserveAspectRatio="none"><use href="#osm"/></svg><svg class="abs" style="left:0;top:0;opacity:0.6" width="424" height="474" viewBox="581.25 230.18 318.08 364.06" preserveAspectRatio="none"><use href="#osm"/></svg><svg class="abs" style="left:0;top:0" width="424" height="474" viewBox="1560 189.7 424 474"><path d="M1769.46 446.08 A15.40 15.40 0 1 1 1793.74 446.08 Q1788.53 454.14 1781.60 460.20 Q1774.67 454.14 1769.46 446.08 Z" fill="#7a4869" stroke="#6d3f5d" stroke-width="0.8"/><text x="1781.6" y="441.1" font-size="12.5" text-anchor="middle" fill="#fff" font-family="Liberation Sans, sans-serif">1</text></svg><div class="abs" style="left:11.8px;top:12.2px;width:34.8px;height:66.1px;background:#fff;border:2.0px solid rgba(0,0,0,.2);border-radius:4px;background-clip:padding-box"></div><div class="abs" style="left:13.8px;top:44.8px;width:30.8px;height:1px;background:#ccc"></div><div class="abs" style="left:22.9px;top:28.5px;width:12.5px;height:2.5px;background:#111"></div><div class="abs" style="left:27.9px;top:23.5px;width:2.5px;height:12.5px;background:#111"></div><div class="abs" style="left:22.9px;top:59.5px;width:12.5px;height:2.5px;background:#111"></div><div class="abs" style="left:241.5px;top:456.0px;width:183.0px;height:18.3px;background:rgba(255,255,255,.82)"></div><div class="abs" style="left:246.5px;top:460.7px;width:13px;height:4.2px;background:#4c7be1"></div><div class="abs" style="left:246.5px;top:464.9px;width:13px;height:4.2px;background:#ffd500"></div><div class="t" style="left:263.80px;top:458.70px;font-size:12.40px;letter-spacing:0.162px;color:#0078a8;">Leaflet</div><div class="t" style="left:305.40px;top:458.70px;font-size:12.40px;color:#333;">|</div><div class="t" style="left:312.60px;top:458.70px;font-size:12.40px;color:#333;">©</div><div class="t" style="left:326.40px;top:458.70px;font-size:12.40px;letter-spacing:0.397px;color:#0078a8;">OpenStreetMap</div></div>
<div class="t" style="left:26.07px;top:680.61px;font-size:17.00px;color:#111;font-weight:bold;">1</div>
<div class="t" style="left:53.10px;top:679.69px;font-size:17.50px;letter-spacing:0.015px;color:#111;font-weight:bold;">Station Avia</div>
<div class="t" style="left:53.10px;top:704.13px;font-size:15.20px;letter-spacing:-0.240px;color:#5c5c5c;">Chaussée De Namur 67</div>
<div class="t" style="left:53.10px;top:726.23px;font-size:15.20px;letter-spacing:-0.022px;color:#4a4a4a;">1367 Ramillies</div>
<div class="t" style="left:53.10px;top:752.63px;font-size:15.20px;letter-spacing:-0.209px;color:#0bb04a;font-weight:bold;">Open now</div>
<svg class="abs" style="left:52.9px;top:780.8px" width="13.2" height="13.2" viewBox="0 0 14 14"><circle cx="7" cy="7" r="5.9" fill="none" stroke="#111" stroke-width="1.5"/><path d="M7.2 3.6 V7.3 H4.6" fill="none" stroke="#111" stroke-width="1.4"/></svg>
<div class="t" style="left:71.00px;top:779.43px;font-size:15.20px;letter-spacing:-0.274px;color:#111;font-weight:bold;">Opening hours</div>
<div class="abs" style="left:397.4px;top:784.6px;border-left:5px solid transparent;border-right:5px solid transparent;border-top:5.5px solid #111"></div>
<div class="abs" style="left:0.00px;top:814.80px;width:424.00px;height:1.20px;background:#e0e0e0;"></div>
<div class="abs" style="left:17.30px;top:833.20px;width:389.50px;height:40.10px;background:#7a4869;border-radius:7px;"></div>
<div class="t" style="left:132.75px;top:844.57px;font-size:17.40px;letter-spacing:0.095px;color:#fff;">Choose this location</div>
<svg class="abs" style="left:0.0px;top:882.0px" width="8" height="8" viewBox="0 0 9 9"><path d="M0 0 V9 H9 Q1 8.5 0 0Z" fill="#555b61"/></svg>
<svg class="abs" style="left:416.0px;top:882.0px" width="8" height="8" viewBox="0 0 9 9"><path d="M9 0 V9 H0 Q8 8.5 9 0Z" fill="#555b61"/></svg>
</div>
<div class="abs" style="left:0;top:917.4px;width:1999px;height:1.6px;background:#111"></div>
</body>
</html>
